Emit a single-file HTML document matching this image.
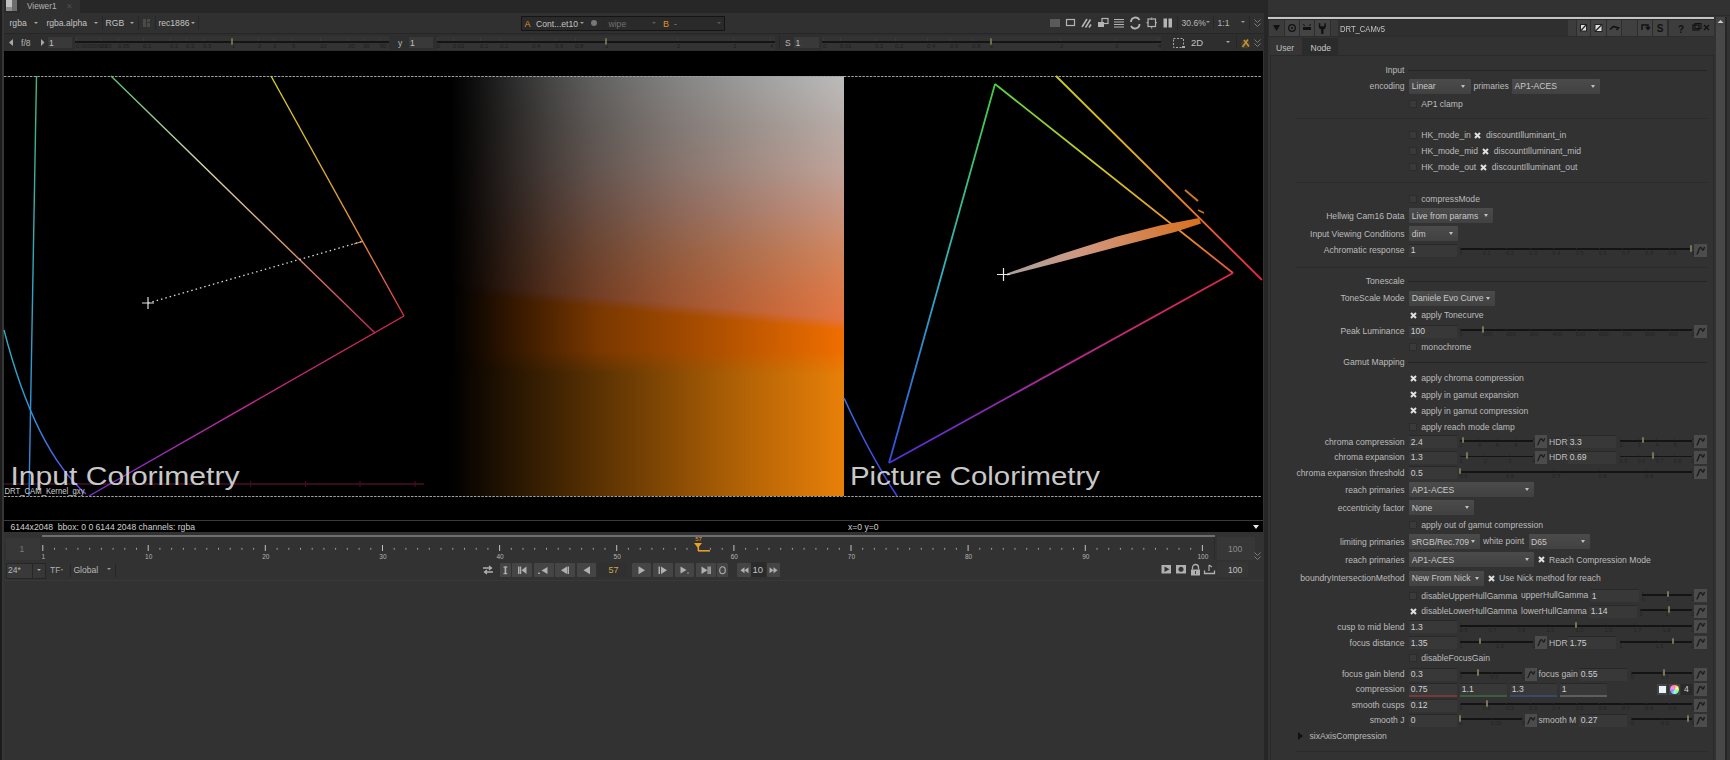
<!DOCTYPE html>
<html><head><meta charset="utf-8">
<style>
*{margin:0;padding:0;box-sizing:border-box}
html,body{width:1730px;height:760px;overflow:hidden;background:#323232;font-family:"Liberation Sans",sans-serif;color:#c8c8c8;position:relative}
.a{position:absolute}
.t{position:absolute;white-space:nowrap;line-height:10px}
svg{position:absolute;overflow:visible}
</style></head><body>

<div class="a" style="left:0px;top:0px;width:1264px;height:13px;background:#272727;"></div>
<div class="a" style="left:0px;top:0px;width:1.5px;height:760px;background:#1c1c1c;"></div>
<div class="a" style="left:1.5px;top:0px;width:2.5px;height:760px;background:#363636;"></div>
<div class="a" style="left:4px;top:0px;width:16px;height:13px;background:#2b2b2b;"></div>
<div class="a" style="left:6px;top:0px;width:6px;height:6.5px;background:#c0c0c0;"></div>
<div class="a" style="left:6px;top:6.5px;width:6px;height:4px;background:#8e8e8e;"></div>
<div class="a" style="left:12px;top:0px;width:5px;height:10.5px;background:#6c6c6c;"></div>
<div class="a" style="left:20px;top:0px;width:60px;height:13px;background:#303030;"></div>
<div class="t" style="left:27px;top:1.5px;color:#b4b4b4;font-size:8.2px;">Viewer1</div>
<div class="t" style="left:66px;top:2px;color:#4e4e4e;font-size:8px">&#x2715;</div>
<div class="a" style="left:4px;top:13px;width:1260px;height:20px;background:#303030;"></div>
<div class="a" style="left:4px;top:33px;width:1260px;height:1px;background:#262626;"></div>
<div class="t" style="left:9.5px;top:18px;color:#c4c4c4;font-size:8.6px;">rgba</div>
<div class="a" style="left:34.0px;top:21.75px;width:0;height:0;border-left:2.0px solid transparent;border-right:2.0px solid transparent;border-top:2.5px solid #a8a8a8"></div>
<div class="t" style="left:46.4px;top:18px;color:#c4c4c4;font-size:8.6px;">rgba.alpha</div>
<div class="a" style="left:94.0px;top:21.75px;width:0;height:0;border-left:2.0px solid transparent;border-right:2.0px solid transparent;border-top:2.5px solid #a8a8a8"></div>
<div class="a" style="left:101.5px;top:16px;width:1px;height:14px;background:#262626;"></div>
<div class="t" style="left:105.6px;top:18px;color:#c4c4c4;font-size:8.6px;">RGB</div>
<div class="a" style="left:129.5px;top:21.75px;width:0;height:0;border-left:2.0px solid transparent;border-right:2.0px solid transparent;border-top:2.5px solid #a8a8a8"></div>
<div class="a" style="left:138px;top:16px;width:1px;height:14px;background:#262626;"></div>
<div class="a" style="left:143px;top:19px;width:3px;height:8px;background:#4a4a4a;"></div>
<div class="a" style="left:147px;top:19px;width:3px;height:3px;background:#4a4a4a;"></div>
<div class="a" style="left:147px;top:23px;width:3px;height:4px;background:#4a4a4a;"></div>
<div class="a" style="left:154.5px;top:16px;width:1px;height:14px;background:#262626;"></div>
<div class="t" style="left:158.4px;top:18px;color:#c4c4c4;font-size:8.6px;">rec1886</div>
<div class="a" style="left:191.0px;top:21.75px;width:0;height:0;border-left:2.0px solid transparent;border-right:2.0px solid transparent;border-top:2.5px solid #a8a8a8"></div>
<div class="a" style="left:198px;top:16px;width:1px;height:14px;background:#262626;"></div>
<div class="a" style="left:521px;top:16px;width:204px;height:15px;background:#151515;"></div>
<div class="a" style="left:522px;top:17px;width:202px;height:13px;background:#2a2a2a;"></div>
<div class="t" style="left:524.5px;top:18.5px;color:#e0902a;font-size:9px;">A</div>
<div class="t" style="left:536px;top:18.5px;color:#c4c4c4;font-size:8.6px;">Cont...et10</div>
<div class="a" style="left:580.0px;top:21.5px;width:0;height:0;border-left:2.0px solid transparent;border-right:2.0px solid transparent;border-top:2px solid #999"></div>
<div class="a" style="left:591px;top:20px;width:6px;height:6px;border-radius:3px;background:#777"></div>
<div class="a" style="left:603px;top:17px;width:1px;height:13px;background:#272727;"></div>
<div class="t" style="left:608.5px;top:18.5px;color:#707070;font-size:8.6px;">wipe</div>
<div class="a" style="left:651.5px;top:21.5px;width:0;height:0;border-left:2.0px solid transparent;border-right:2.0px solid transparent;border-top:2px solid #5a5a5a"></div>
<div class="t" style="left:663px;top:18.5px;color:#e0902a;font-size:9px;">B</div>
<div class="t" style="left:674px;top:18.5px;color:#888;font-size:8.6px;">-</div>
<div class="a" style="left:716.5px;top:21.5px;width:0;height:0;border-left:2.0px solid transparent;border-right:2.0px solid transparent;border-top:2px solid #5a5a5a"></div>
<svg style="left:0;top:0" width="1730" height="60" viewBox="0 0 1730 60">
<rect x="1050" y="19" width="10" height="8" fill="#5a5a5a"/>
<rect x="1066.5" y="19.5" width="8" height="6" fill="none" stroke="#b4b4b4" stroke-width="1.2"/>
<path d="M1082 27L1087 19M1085.5 27.5L1090.5 19.5M1089 27.5l2-3" stroke="#b4b4b4" stroke-width="1.6"/>
<rect x="1102" y="18.5" width="6" height="5" fill="none" stroke="#b4b4b4" stroke-width="1.2"/><rect x="1098" y="22" width="6" height="5" fill="#b4b4b4"/>
<path d="M1114 19.5h10M1114 22h10M1114 24.5h10M1114 27h10" stroke="#b4b4b4" stroke-width="1.2"/>
<path d="M1131 22a4.5 4.5 0 0 1 8.5-2M1139.5 24a4.5 4.5 0 0 1-8.5 2" fill="none" stroke="#b4b4b4" stroke-width="1.8"/>
<rect x="1148" y="19" width="7.5" height="7.5" fill="none" stroke="#b4b4b4" stroke-width="1.2"/>
<path d="M1151.7 17.5v2M1151.7 26.5v2M1146.5 22.7h2M1155 22.7h2" stroke="#b4b4b4" stroke-width="1"/>
<rect x="1163.5" y="18.5" width="3.5" height="9" fill="#b4b4b4"/><rect x="1168.5" y="18.5" width="3.5" height="9" fill="#b4b4b4"/>
</svg>
<div class="a" style="left:1177px;top:16px;width:1px;height:14px;background:#262626;"></div>
<div class="t" style="left:1181.5px;top:18px;color:#b8b8b8;font-size:8.6px;">30.6%</div>
<div class="a" style="left:1206.0px;top:21.25px;width:0;height:0;border-left:2.0px solid transparent;border-right:2.0px solid transparent;border-top:2.5px solid #999"></div>
<div class="a" style="left:1213px;top:16px;width:1px;height:14px;background:#262626;"></div>
<div class="t" style="left:1217.5px;top:18px;color:#b8b8b8;font-size:8.6px;">1:1</div>
<div class="a" style="left:1241.0px;top:21.25px;width:0;height:0;border-left:2.0px solid transparent;border-right:2.0px solid transparent;border-top:2.5px solid #999"></div>
<div class="a" style="left:1248.5px;top:16px;width:1px;height:14px;background:#262626;"></div>
<svg style="left:1253px;top:18px" width="9" height="10" viewBox="0 0 9 10"><path d="M1.5 1.5l3 3 3-3M1.5 5.5l3 3 3-3" fill="none" stroke="#858585" stroke-width="0.9"/></svg>
<div class="a" style="left:4px;top:34px;width:1260px;height:17px;background:#2e2e2e;"></div>
<svg style="left:0;top:30px" width="1730" height="24" viewBox="0 30 1730 24"><path d="M9 42.5l4-3.5v7z" fill="#a8a8a8"/><path d="M41 39v7l3.5-3.5z" fill="#a8a8a8"/></svg>
<div class="t" style="left:21px;top:37.5px;color:#b8b8b8;font-size:8.6px;">f/8</div>
<div class="a" style="left:47.5px;top:37px;width:24.5px;height:11px;background:#393939;"></div>
<div class="t" style="left:49.0px;top:37.5px;color:#c0c0c0;font-size:8.6px;">1</div>
<div class="a" style="left:75px;top:35.5px;width:313.5px;height:14px;background:#333333;"></div>
<div class="a" style="left:75px;top:41.2px;width:313.5px;height:2px;background:#141414;"></div>
<div class="a" style="left:76px;top:38.0px;width:1px;height:3px;background:#3c3c3c;"></div>
<div class="t" style="left:76px;top:41.0px;color:#1e1e1e;font-size:6px;">0.00000625</div>
<div class="a" style="left:100px;top:38.0px;width:1px;height:3px;background:#3c3c3c;"></div>
<div class="t" style="left:100px;top:41.0px;color:#1e1e1e;font-size:6px;">0.03</div>
<div class="a" style="left:118px;top:38.0px;width:1px;height:3px;background:#3c3c3c;"></div>
<div class="t" style="left:118px;top:41.0px;color:#1e1e1e;font-size:6px;">0.05</div>
<div class="a" style="left:143px;top:38.0px;width:1px;height:3px;background:#3c3c3c;"></div>
<div class="t" style="left:143px;top:41.0px;color:#1e1e1e;font-size:6px;">0.1</div>
<div class="a" style="left:170px;top:38.0px;width:1px;height:3px;background:#3c3c3c;"></div>
<div class="t" style="left:170px;top:41.0px;color:#1e1e1e;font-size:6px;">0.2</div>
<div class="a" style="left:186px;top:38.0px;width:1px;height:3px;background:#3c3c3c;"></div>
<div class="t" style="left:186px;top:41.0px;color:#1e1e1e;font-size:6px;">0.3</div>
<div class="a" style="left:203px;top:38.0px;width:1px;height:3px;background:#3c3c3c;"></div>
<div class="t" style="left:203px;top:41.0px;color:#1e1e1e;font-size:6px;">0.5</div>
<div class="a" style="left:232px;top:38.0px;width:1px;height:3px;background:#3c3c3c;"></div>
<div class="t" style="left:232px;top:41.0px;color:#1e1e1e;font-size:6px;">1</div>
<div class="a" style="left:258px;top:38.0px;width:1px;height:3px;background:#3c3c3c;"></div>
<div class="t" style="left:258px;top:41.0px;color:#1e1e1e;font-size:6px;">2</div>
<div class="a" style="left:273px;top:38.0px;width:1px;height:3px;background:#3c3c3c;"></div>
<div class="t" style="left:273px;top:41.0px;color:#1e1e1e;font-size:6px;">3</div>
<div class="a" style="left:292px;top:38.0px;width:1px;height:3px;background:#3c3c3c;"></div>
<div class="t" style="left:292px;top:41.0px;color:#1e1e1e;font-size:6px;">5</div>
<div class="a" style="left:320px;top:38.0px;width:1px;height:3px;background:#3c3c3c;"></div>
<div class="t" style="left:320px;top:41.0px;color:#1e1e1e;font-size:6px;">10</div>
<div class="a" style="left:348px;top:38.0px;width:1px;height:3px;background:#3c3c3c;"></div>
<div class="t" style="left:348px;top:41.0px;color:#1e1e1e;font-size:6px;">20</div>
<div class="a" style="left:363px;top:38.0px;width:1px;height:3px;background:#3c3c3c;"></div>
<div class="t" style="left:363px;top:41.0px;color:#1e1e1e;font-size:6px;">30</div>
<div class="a" style="left:380px;top:38.0px;width:1px;height:3px;background:#3c3c3c;"></div>
<div class="t" style="left:380px;top:41.0px;color:#1e1e1e;font-size:6px;">50</div>
<div class="a" style="left:231px;top:37.5px;width:2px;height:7px;background:#6e6e4c;border-radius:1px"></div>
<div class="t" style="left:398px;top:37.5px;color:#b8b8b8;font-size:8.6px;">y</div>
<div class="a" style="left:408.5px;top:37px;width:24.5px;height:11px;background:#393939;"></div>
<div class="t" style="left:410.0px;top:37.5px;color:#c0c0c0;font-size:8.6px;">1</div>
<div class="a" style="left:436.5px;top:35.5px;width:338.5px;height:14px;background:#333333;"></div>
<div class="a" style="left:436.5px;top:41.2px;width:338.5px;height:2px;background:#141414;"></div>
<div class="a" style="left:437px;top:38.0px;width:1px;height:3px;background:#3c3c3c;"></div>
<div class="t" style="left:437px;top:41.0px;color:#1e1e1e;font-size:6px;">0</div>
<div class="a" style="left:453px;top:38.0px;width:1px;height:3px;background:#3c3c3c;"></div>
<div class="t" style="left:453px;top:41.0px;color:#1e1e1e;font-size:6px;">0.01</div>
<div class="a" style="left:480px;top:38.0px;width:1px;height:3px;background:#3c3c3c;"></div>
<div class="t" style="left:480px;top:41.0px;color:#1e1e1e;font-size:6px;">0.1</div>
<div class="a" style="left:500px;top:38.0px;width:1px;height:3px;background:#3c3c3c;"></div>
<div class="t" style="left:500px;top:41.0px;color:#1e1e1e;font-size:6px;">0.2</div>
<div class="a" style="left:532px;top:38.0px;width:1px;height:3px;background:#3c3c3c;"></div>
<div class="t" style="left:532px;top:41.0px;color:#1e1e1e;font-size:6px;">0.4</div>
<div class="a" style="left:555px;top:38.0px;width:1px;height:3px;background:#3c3c3c;"></div>
<div class="t" style="left:555px;top:41.0px;color:#1e1e1e;font-size:6px;">0.6</div>
<div class="a" style="left:575px;top:38.0px;width:1px;height:3px;background:#3c3c3c;"></div>
<div class="t" style="left:575px;top:41.0px;color:#1e1e1e;font-size:6px;">0.8</div>
<div class="a" style="left:605px;top:38.0px;width:1px;height:3px;background:#3c3c3c;"></div>
<div class="t" style="left:605px;top:41.0px;color:#1e1e1e;font-size:6px;">1</div>
<div class="a" style="left:677px;top:38.0px;width:1px;height:3px;background:#3c3c3c;"></div>
<div class="t" style="left:677px;top:41.0px;color:#1e1e1e;font-size:6px;">2</div>
<div class="a" style="left:733px;top:38.0px;width:1px;height:3px;background:#3c3c3c;"></div>
<div class="t" style="left:733px;top:41.0px;color:#1e1e1e;font-size:6px;">3</div>
<div class="a" style="left:770px;top:38.0px;width:1px;height:3px;background:#3c3c3c;"></div>
<div class="t" style="left:770px;top:41.0px;color:#1e1e1e;font-size:6px;">4</div>
<div class="a" style="left:605px;top:37.5px;width:2px;height:7px;background:#6e6e4c;border-radius:1px"></div>
<div class="a" style="left:778.5px;top:36px;width:1px;height:13px;background:#262626;"></div>
<div class="t" style="left:785px;top:37.5px;color:#b8b8b8;font-size:8.6px;">S</div>
<div class="a" style="left:794px;top:37px;width:25px;height:11px;background:#393939;"></div>
<div class="t" style="left:795.5px;top:37.5px;color:#c0c0c0;font-size:8.6px;">1</div>
<div class="a" style="left:822px;top:35.5px;width:339px;height:14px;background:#333333;"></div>
<div class="a" style="left:822px;top:41.2px;width:339px;height:2px;background:#141414;"></div>
<div class="a" style="left:823px;top:38.0px;width:1px;height:3px;background:#3c3c3c;"></div>
<div class="t" style="left:823px;top:41.0px;color:#1e1e1e;font-size:6px;">0</div>
<div class="a" style="left:840px;top:38.0px;width:1px;height:3px;background:#3c3c3c;"></div>
<div class="t" style="left:840px;top:41.0px;color:#1e1e1e;font-size:6px;">0.01</div>
<div class="a" style="left:875px;top:38.0px;width:1px;height:3px;background:#3c3c3c;"></div>
<div class="t" style="left:875px;top:41.0px;color:#1e1e1e;font-size:6px;">0.1</div>
<div class="a" style="left:895px;top:38.0px;width:1px;height:3px;background:#3c3c3c;"></div>
<div class="t" style="left:895px;top:41.0px;color:#1e1e1e;font-size:6px;">0.2</div>
<div class="a" style="left:927px;top:38.0px;width:1px;height:3px;background:#3c3c3c;"></div>
<div class="t" style="left:927px;top:41.0px;color:#1e1e1e;font-size:6px;">0.4</div>
<div class="a" style="left:950px;top:38.0px;width:1px;height:3px;background:#3c3c3c;"></div>
<div class="t" style="left:950px;top:41.0px;color:#1e1e1e;font-size:6px;">0.6</div>
<div class="a" style="left:972px;top:38.0px;width:1px;height:3px;background:#3c3c3c;"></div>
<div class="t" style="left:972px;top:41.0px;color:#1e1e1e;font-size:6px;">0.8</div>
<div class="a" style="left:990px;top:38.0px;width:1px;height:3px;background:#3c3c3c;"></div>
<div class="t" style="left:990px;top:41.0px;color:#1e1e1e;font-size:6px;">1</div>
<div class="a" style="left:1060px;top:38.0px;width:1px;height:3px;background:#3c3c3c;"></div>
<div class="t" style="left:1060px;top:41.0px;color:#1e1e1e;font-size:6px;">2</div>
<div class="a" style="left:1115px;top:38.0px;width:1px;height:3px;background:#3c3c3c;"></div>
<div class="t" style="left:1115px;top:41.0px;color:#1e1e1e;font-size:6px;">3</div>
<div class="a" style="left:1158px;top:38.0px;width:1px;height:3px;background:#3c3c3c;"></div>
<div class="t" style="left:1158px;top:41.0px;color:#1e1e1e;font-size:6px;">4</div>
<div class="a" style="left:990px;top:37.5px;width:2px;height:7px;background:#6e6e4c;border-radius:1px"></div>
<svg style="left:1170px;top:36px" width="20" height="14" viewBox="0 0 20 14"><rect x="3.5" y="2.5" width="10" height="9" fill="none" stroke="#aaa" stroke-width="1" stroke-dasharray="2 1.5"/><path d="M12 10h3v2h-3z" fill="#aaa"/></svg>
<div class="t" style="left:1191px;top:37.5px;color:#c0c0c0;font-size:9.5px;">2D</div>
<div class="a" style="left:1226.0px;top:40.75px;width:0;height:0;border-left:2.0px solid transparent;border-right:2.0px solid transparent;border-top:2.5px solid #aaa"></div>
<div class="a" style="left:1235.5px;top:36px;width:1px;height:13px;background:#262626;"></div>
<svg style="left:1239px;top:37px" width="13" height="12" viewBox="0 0 13 12"><circle cx="6.5" cy="7" r="4.5" fill="#4a3a22"/><path d="M3.5 10L9 2.5M5 3l5 6.5" stroke="#b89440" stroke-width="1.6"/></svg>
<svg style="left:1253px;top:38px" width="9" height="10" viewBox="0 0 9 10"><path d="M1.5 1.5l3 3 3-3M1.5 5.5l3 3 3-3" fill="none" stroke="#858585" stroke-width="0.9"/></svg>
<div class="a" style="left:4px;top:51px;width:1258.5px;height:481px;background:#000;"></div>
<div class="a" style="left:423px;top:76px;width:421px;height:420px;overflow:hidden;background:#000">
<div class="a" style="left:0;top:0;width:421px;height:420px;background:linear-gradient(#e88008,#e88008),linear-gradient(to right,#000 0%,#000 6.5%,#101010 12%,#353535 25%,#7a7a7a 50%,#c2c2c2 75%,#fff 100%);background-blend-mode:multiply"></div>
<div class="a" style="left:0;top:0;width:421px;height:420px;background:linear-gradient(#f06e00,#f06e00),linear-gradient(to right,#000 0%,#000 6.5%,#121212 12%,#3d3d3d 23%,#828282 42%,#bababa 70%,#fff 100%);background-blend-mode:multiply;-webkit-mask-image:linear-gradient(to bottom,#000 0%,#000 65.5%,transparent 71%);mask-image:linear-gradient(to bottom,#000 0%,#000 65.5%,transparent 71%)"></div>
<div class="a" style="left:0;top:0;width:421px;height:420px;background:linear-gradient(to bottom,#bcbcbc 0%,#b8aca6 12%,#c0a49a 22%,#c89480 32%,#d2865e 42%,#dc7c4c 50%,#e47440 58%),linear-gradient(to right,#000 0%,#000 6.5%,#141414 12%,#363636 20%,#5e5e5e 30%,#808080 40%,#9a9a9a 50%,#b2b2b2 60%,#dadada 80%,#fff 100%);background-blend-mode:multiply;-webkit-mask-image:linear-gradient(185.3deg,#000 53%,transparent 55.6%);mask-image:linear-gradient(185.3deg,#000 53%,transparent 55.6%)"></div>
</div>
<svg style="left:0;top:0" width="1730" height="760" viewBox="0 0 1730 760">
<defs><filter id="bl" x="-5%" y="-20%" width="110%" height="140%"><feGaussianBlur stdDeviation="0.6"/></filter>
<linearGradient id="g1" gradientUnits="userSpaceOnUse" x1="36" y1="76" x2="29" y2="496"><stop offset="0" stop-color="#3db87e"/><stop offset="0.5" stop-color="#30a8c0"/><stop offset="1" stop-color="#3080e0"/></linearGradient>
<linearGradient id="g2" gradientUnits="userSpaceOnUse" x1="111" y1="76" x2="375" y2="333"><stop offset="0" stop-color="#5cc070"/><stop offset="0.35" stop-color="#d8d8a8"/><stop offset="0.7" stop-color="#e09060"/><stop offset="1" stop-color="#c02860"/></linearGradient>
<linearGradient id="g3" gradientUnits="userSpaceOnUse" x1="271" y1="76" x2="404" y2="316"><stop offset="0" stop-color="#d8d020"/><stop offset="0.6" stop-color="#e09838"/><stop offset="0.88" stop-color="#e06040"/><stop offset="1" stop-color="#d83048"/></linearGradient>
<linearGradient id="g4" gradientUnits="userSpaceOnUse" x1="404" y1="316" x2="90" y2="496"><stop offset="0" stop-color="#d82850"/><stop offset="0.5" stop-color="#c02890"/><stop offset="1" stop-color="#8030e0"/></linearGradient>
<linearGradient id="g5" gradientUnits="userSpaceOnUse" x1="4" y1="330" x2="85" y2="496"><stop offset="0" stop-color="#30b0b8"/><stop offset="0.5" stop-color="#3090e0"/><stop offset="1" stop-color="#6040f0"/></linearGradient>
<linearGradient id="h1" gradientUnits="userSpaceOnUse" x1="995" y1="84" x2="889" y2="463"><stop offset="0" stop-color="#40d040"/><stop offset="0.5" stop-color="#30b0c0"/><stop offset="1" stop-color="#3050e0"/></linearGradient>
<linearGradient id="h2" gradientUnits="userSpaceOnUse" x1="995" y1="84" x2="1233" y2="273"><stop offset="0" stop-color="#50d040"/><stop offset="0.4" stop-color="#d0d020"/><stop offset="0.8" stop-color="#f09020"/><stop offset="1" stop-color="#e05040"/></linearGradient>
<linearGradient id="h3" gradientUnits="userSpaceOnUse" x1="1056" y1="76" x2="1262" y2="280"><stop offset="0" stop-color="#c8d020"/><stop offset="0.5" stop-color="#f0a020"/><stop offset="1" stop-color="#e82040"/></linearGradient>
<linearGradient id="h4" gradientUnits="userSpaceOnUse" x1="1233" y1="273" x2="889" y2="463"><stop offset="0" stop-color="#e02848"/><stop offset="0.5" stop-color="#b02890"/><stop offset="1" stop-color="#5030e0"/></linearGradient>
<linearGradient id="h5" gradientUnits="userSpaceOnUse" x1="844" y1="400" x2="895" y2="496"><stop offset="0" stop-color="#3070e0"/><stop offset="1" stop-color="#4838e8"/></linearGradient>
<linearGradient id="w1" gradientUnits="userSpaceOnUse" x1="1003" y1="274" x2="1199" y2="222"><stop offset="0" stop-color="#a8a0a0"/><stop offset="0.4" stop-color="#d09880"/><stop offset="1" stop-color="#d87020"/></linearGradient>
</defs>
<g fill="none" stroke-width="1.4">
<line x1="4" y1="76.5" x2="1262" y2="76.5" stroke="#a0a0a0" stroke-width="1" stroke-dasharray="2.5 1.2"/>
<line x1="4" y1="496.5" x2="1262" y2="496.5" stroke="#a0a0a0" stroke-width="1" stroke-dasharray="2.5 1.2"/>
<line x1="4" y1="484" x2="424" y2="484" stroke="#4a1020" stroke-width="1.5"/>
<path d="M250.7 481v6M305.6 481v6M360 481v6M415 481v6" stroke="#4a1020" stroke-width="1"/>
<line x1="36.5" y1="76" x2="29" y2="496" stroke="url(#g1)"/>
<line x1="111" y1="76" x2="375" y2="333" stroke="url(#g2)"/>
<line x1="271" y1="76" x2="404" y2="316" stroke="url(#g3)"/>
<line x1="404" y1="316" x2="89" y2="496" stroke="url(#g4)"/>
<path d="M4 330 Q 35 450 86 494" stroke="url(#g5)"/>
<line x1="148" y1="303" x2="362" y2="241.5" stroke="#d8d8d8" stroke-width="1.3" stroke-dasharray="1.5 3"/>
<line x1="354" y1="244" x2="363" y2="241.3" stroke="#d8a050" stroke-width="1.2"/>
<path d="M142 303H154M148 297V309" stroke="#e0e0e0" stroke-width="1.2"/>
<line x1="995" y1="84" x2="889" y2="463" stroke="url(#h1)" stroke-width="1.8"/>
<line x1="995" y1="84" x2="1233" y2="273" stroke="url(#h2)" stroke-width="1.8"/>
<line x1="1056" y1="76" x2="1262" y2="280" stroke="url(#h3)" stroke-width="1.8"/>
<line x1="1233" y1="273" x2="889" y2="463" stroke="url(#h4)" stroke-width="1.8"/>
<path d="M844 398 Q 870 455 897 496" stroke="url(#h5)" stroke-width="1.6"/>
<polygon points="1007,273.5 1060,254.5 1117,236.5 1160,225.5 1199,218 1201,223.5 1175,232 1117,247 1060,262 1007,275.5" fill="url(#w1)" stroke="none" filter="url(#bl)"/>
<line x1="1185" y1="190" x2="1198" y2="201" stroke="#c87828" stroke-width="2"/>
<line x1="1198" y1="210" x2="1204" y2="213" stroke="#c87828" stroke-width="1.5"/>
<path d="M997 274.5H1010M1003.5 268V281" stroke="#e8e8e8" stroke-width="1.2"/>
</g>
<text x="10.5" y="485" font-family="Liberation Sans" font-size="26" fill="#c8c8c8" textLength="229" lengthAdjust="spacingAndGlyphs">Input Colorimetry</text>
<text x="850" y="485" font-family="Liberation Sans" font-size="26" fill="#c8c8c8" textLength="250" lengthAdjust="spacingAndGlyphs">Picture Colorimetry</text>
<text x="4.5" y="494" font-family="Liberation Sans" font-size="8.5" fill="#d0d0d0" textLength="80" lengthAdjust="spacingAndGlyphs">DRT_CAM_Kernel_gxy</text>
</svg>
<div class="a" style="left:4px;top:520px;width:1258.5px;height:1px;background:#3a3a3a;"></div>
<div class="t" style="left:10.5px;top:521.5px;color:#d0d0d0;font-size:8.6px;">6144x2048&nbsp; bbox: 0 0 6144 2048 channels: rgba</div>
<div class="t" style="left:848px;top:521.5px;color:#d0d0d0;font-size:8.6px;">x=0 y=0</div>
<div class="a" style="left:1253.0px;top:524.5px;width:0;height:0;border-left:3.5px solid transparent;border-right:3.5px solid transparent;border-top:4px solid #e8e8e8"></div>
<div class="a" style="left:4px;top:532px;width:1260px;height:48px;background:#323232;"></div>
<div class="a" style="left:42px;top:535px;width:1172.5px;height:2px;background:#6e6e6e;"></div>
<div class="a" style="left:5.5px;top:537.5px;width:34.5px;height:22.5px;background:#373737;"></div>
<div class="t" style="left:19.5px;top:544px;color:#7a7a7a;font-size:8.6px;">1</div>
<div class="a" style="left:1214px;top:537px;width:1px;height:23px;background:#2a2a2a;"></div>
<div class="a" style="left:1217px;top:537px;width:38px;height:23px;background:#373737;"></div>
<div class="t" style="left:1228px;top:544px;color:#8a8a8a;font-size:8.6px;">100</div>
<svg style="left:0;top:0" width="1730" height="600" viewBox="0 0 1730 600"><rect x="42.3" y="545" width="1" height="6" fill="#c0c0c0"/><rect x="54.0" y="547.8" width="1" height="2" fill="#9a9a9a"/><rect x="65.7" y="547.8" width="1" height="2" fill="#9a9a9a"/><rect x="77.4" y="547.8" width="1" height="2" fill="#9a9a9a"/><rect x="89.2" y="547.8" width="1" height="2" fill="#9a9a9a"/><rect x="100.9" y="547.8" width="1" height="2" fill="#9a9a9a"/><rect x="112.6" y="547.8" width="1" height="2" fill="#9a9a9a"/><rect x="124.3" y="547.8" width="1" height="2" fill="#9a9a9a"/><rect x="136.0" y="547.8" width="1" height="2" fill="#9a9a9a"/><rect x="147.7" y="545" width="1" height="6" fill="#c0c0c0"/><rect x="159.4" y="547.8" width="1" height="2" fill="#9a9a9a"/><rect x="171.1" y="547.8" width="1" height="2" fill="#9a9a9a"/><rect x="182.9" y="547.8" width="1" height="2" fill="#9a9a9a"/><rect x="194.6" y="547.8" width="1" height="2" fill="#9a9a9a"/><rect x="206.3" y="547.8" width="1" height="2" fill="#9a9a9a"/><rect x="218.0" y="547.8" width="1" height="2" fill="#9a9a9a"/><rect x="229.7" y="547.8" width="1" height="2" fill="#9a9a9a"/><rect x="241.4" y="547.8" width="1" height="2" fill="#9a9a9a"/><rect x="253.1" y="547.8" width="1" height="2" fill="#9a9a9a"/><rect x="264.8" y="545" width="1" height="6" fill="#c0c0c0"/><rect x="276.6" y="547.8" width="1" height="2" fill="#9a9a9a"/><rect x="288.3" y="547.8" width="1" height="2" fill="#9a9a9a"/><rect x="300.0" y="547.8" width="1" height="2" fill="#9a9a9a"/><rect x="311.7" y="547.8" width="1" height="2" fill="#9a9a9a"/><rect x="323.4" y="547.8" width="1" height="2" fill="#9a9a9a"/><rect x="335.1" y="547.8" width="1" height="2" fill="#9a9a9a"/><rect x="346.8" y="547.8" width="1" height="2" fill="#9a9a9a"/><rect x="358.6" y="547.8" width="1" height="2" fill="#9a9a9a"/><rect x="370.3" y="547.8" width="1" height="2" fill="#9a9a9a"/><rect x="382.0" y="545" width="1" height="6" fill="#c0c0c0"/><rect x="393.7" y="547.8" width="1" height="2" fill="#9a9a9a"/><rect x="405.4" y="547.8" width="1" height="2" fill="#9a9a9a"/><rect x="417.1" y="547.8" width="1" height="2" fill="#9a9a9a"/><rect x="428.8" y="547.8" width="1" height="2" fill="#9a9a9a"/><rect x="440.5" y="547.8" width="1" height="2" fill="#9a9a9a"/><rect x="452.3" y="547.8" width="1" height="2" fill="#9a9a9a"/><rect x="464.0" y="547.8" width="1" height="2" fill="#9a9a9a"/><rect x="475.7" y="547.8" width="1" height="2" fill="#9a9a9a"/><rect x="487.4" y="547.8" width="1" height="2" fill="#9a9a9a"/><rect x="499.1" y="545" width="1" height="6" fill="#c0c0c0"/><rect x="510.8" y="547.8" width="1" height="2" fill="#9a9a9a"/><rect x="522.5" y="547.8" width="1" height="2" fill="#9a9a9a"/><rect x="534.2" y="547.8" width="1" height="2" fill="#9a9a9a"/><rect x="546.0" y="547.8" width="1" height="2" fill="#9a9a9a"/><rect x="557.7" y="547.8" width="1" height="2" fill="#9a9a9a"/><rect x="569.4" y="547.8" width="1" height="2" fill="#9a9a9a"/><rect x="581.1" y="547.8" width="1" height="2" fill="#9a9a9a"/><rect x="592.8" y="547.8" width="1" height="2" fill="#9a9a9a"/><rect x="604.5" y="547.8" width="1" height="2" fill="#9a9a9a"/><rect x="616.2" y="545" width="1" height="6" fill="#c0c0c0"/><rect x="627.9" y="547.8" width="1" height="2" fill="#9a9a9a"/><rect x="639.7" y="547.8" width="1" height="2" fill="#9a9a9a"/><rect x="651.4" y="547.8" width="1" height="2" fill="#9a9a9a"/><rect x="663.1" y="547.8" width="1" height="2" fill="#9a9a9a"/><rect x="674.8" y="547.8" width="1" height="2" fill="#9a9a9a"/><rect x="686.5" y="547.8" width="1" height="2" fill="#9a9a9a"/><rect x="698.2" y="547.8" width="1" height="2" fill="#9a9a9a"/><rect x="709.9" y="547.8" width="1" height="2" fill="#9a9a9a"/><rect x="721.7" y="547.8" width="1" height="2" fill="#9a9a9a"/><rect x="733.4" y="545" width="1" height="6" fill="#c0c0c0"/><rect x="745.1" y="547.8" width="1" height="2" fill="#9a9a9a"/><rect x="756.8" y="547.8" width="1" height="2" fill="#9a9a9a"/><rect x="768.5" y="547.8" width="1" height="2" fill="#9a9a9a"/><rect x="780.2" y="547.8" width="1" height="2" fill="#9a9a9a"/><rect x="791.9" y="547.8" width="1" height="2" fill="#9a9a9a"/><rect x="803.6" y="547.8" width="1" height="2" fill="#9a9a9a"/><rect x="815.4" y="547.8" width="1" height="2" fill="#9a9a9a"/><rect x="827.1" y="547.8" width="1" height="2" fill="#9a9a9a"/><rect x="838.8" y="547.8" width="1" height="2" fill="#9a9a9a"/><rect x="850.5" y="545" width="1" height="6" fill="#c0c0c0"/><rect x="862.2" y="547.8" width="1" height="2" fill="#9a9a9a"/><rect x="873.9" y="547.8" width="1" height="2" fill="#9a9a9a"/><rect x="885.6" y="547.8" width="1" height="2" fill="#9a9a9a"/><rect x="897.3" y="547.8" width="1" height="2" fill="#9a9a9a"/><rect x="909.1" y="547.8" width="1" height="2" fill="#9a9a9a"/><rect x="920.8" y="547.8" width="1" height="2" fill="#9a9a9a"/><rect x="932.5" y="547.8" width="1" height="2" fill="#9a9a9a"/><rect x="944.2" y="547.8" width="1" height="2" fill="#9a9a9a"/><rect x="955.9" y="547.8" width="1" height="2" fill="#9a9a9a"/><rect x="967.6" y="545" width="1" height="6" fill="#c0c0c0"/><rect x="979.3" y="547.8" width="1" height="2" fill="#9a9a9a"/><rect x="991.1" y="547.8" width="1" height="2" fill="#9a9a9a"/><rect x="1002.8" y="547.8" width="1" height="2" fill="#9a9a9a"/><rect x="1014.5" y="547.8" width="1" height="2" fill="#9a9a9a"/><rect x="1026.2" y="547.8" width="1" height="2" fill="#9a9a9a"/><rect x="1037.9" y="547.8" width="1" height="2" fill="#9a9a9a"/><rect x="1049.6" y="547.8" width="1" height="2" fill="#9a9a9a"/><rect x="1061.3" y="547.8" width="1" height="2" fill="#9a9a9a"/><rect x="1073.0" y="547.8" width="1" height="2" fill="#9a9a9a"/><rect x="1084.8" y="545" width="1" height="6" fill="#c0c0c0"/><rect x="1096.5" y="547.8" width="1" height="2" fill="#9a9a9a"/><rect x="1108.2" y="547.8" width="1" height="2" fill="#9a9a9a"/><rect x="1119.9" y="547.8" width="1" height="2" fill="#9a9a9a"/><rect x="1131.6" y="547.8" width="1" height="2" fill="#9a9a9a"/><rect x="1143.3" y="547.8" width="1" height="2" fill="#9a9a9a"/><rect x="1155.0" y="547.8" width="1" height="2" fill="#9a9a9a"/><rect x="1166.7" y="547.8" width="1" height="2" fill="#9a9a9a"/><rect x="1178.5" y="547.8" width="1" height="2" fill="#9a9a9a"/><rect x="1190.2" y="547.8" width="1" height="2" fill="#9a9a9a"/><rect x="1201.9" y="545" width="1" height="6" fill="#c0c0c0"/></svg>
<div class="t" style="left:-6.700000000000003px;width:100px;text-align:center;top:551.5px;color:#b4b4b4;font-size:6.5px;">1</div>
<div class="t" style="left:98.71699999999998px;width:100px;text-align:center;top:551.5px;color:#b4b4b4;font-size:6.5px;">10</div>
<div class="t" style="left:215.84699999999998px;width:100px;text-align:center;top:551.5px;color:#b4b4b4;font-size:6.5px;">20</div>
<div class="t" style="left:332.977px;width:100px;text-align:center;top:551.5px;color:#b4b4b4;font-size:6.5px;">30</div>
<div class="t" style="left:450.10699999999997px;width:100px;text-align:center;top:551.5px;color:#b4b4b4;font-size:6.5px;">40</div>
<div class="t" style="left:567.237px;width:100px;text-align:center;top:551.5px;color:#b4b4b4;font-size:6.5px;">50</div>
<div class="t" style="left:684.367px;width:100px;text-align:center;top:551.5px;color:#b4b4b4;font-size:6.5px;">60</div>
<div class="t" style="left:801.4969999999998px;width:100px;text-align:center;top:551.5px;color:#b4b4b4;font-size:6.5px;">70</div>
<div class="t" style="left:918.6269999999998px;width:100px;text-align:center;top:551.5px;color:#b4b4b4;font-size:6.5px;">80</div>
<div class="t" style="left:1035.7569999999998px;width:100px;text-align:center;top:551.5px;color:#b4b4b4;font-size:6.5px;">90</div>
<div class="t" style="left:1152.887px;width:100px;text-align:center;top:551.5px;color:#b4b4b4;font-size:6.5px;">100</div>
<svg style="left:0;top:0" width="1730" height="600" viewBox="0 0 1730 600"><path d="M694 543h8l-4 5z" fill="#f0a020"/><rect x="697.6" y="547" width="1.4" height="4" fill="#f0a020"/><rect x="698" y="550" width="12" height="1.6" fill="#e0a030"/></svg>
<div class="t" style="left:648.5px;width:100px;text-align:center;top:534px;color:#e0a030;font-size:6px;">57</div>
<svg style="left:1253px;top:551px" width="9" height="10" viewBox="0 0 9 10"><path d="M1.5 1.5l3 3 3-3M1.5 5.5l3 3 3-3" fill="none" stroke="#858585" stroke-width="0.9"/></svg>
<div class="a" style="left:5.5px;top:562.5px;width:40px;height:16px;background:#262626;"></div>
<div class="a" style="left:6.5px;top:563.5px;width:25.5px;height:14px;background:#393939;"></div>
<div class="a" style="left:33px;top:563.5px;width:12px;height:14px;background:#373737;"></div>
<div class="t" style="left:8px;top:565px;color:#b8b8b8;font-size:8.6px;">24*</div>
<div class="a" style="left:36.5px;top:568.75px;width:0;height:0;border-left:2.0px solid transparent;border-right:2.0px solid transparent;border-top:2.5px solid #aaa"></div>
<div class="t" style="left:50px;top:565px;color:#b0b0b0;font-size:8.6px;">TF</div>
<div class="a" style="left:61.0px;top:568.5px;width:0;height:0;border-left:1.5px solid transparent;border-right:1.5px solid transparent;border-top:2px solid #999"></div>
<div class="a" style="left:69.5px;top:564px;width:1px;height:13px;background:#262626;"></div>
<div class="t" style="left:73.4px;top:565px;color:#b8b8b8;font-size:8.6px;">Global</div>
<div class="a" style="left:106.5px;top:568.25px;width:0;height:0;border-left:2.0px solid transparent;border-right:2.0px solid transparent;border-top:2.5px solid #999"></div>
<div class="a" style="left:115px;top:564px;width:1px;height:13px;background:#262626;"></div>
<svg style="left:481px;top:565px" width="14" height="11" viewBox="0 0 14 11"><path d="M2 3h8M8 1l2.5 2L8 5M12 7H4M6 5L3.5 7 6 9" fill="none" stroke="#b0b0b0" stroke-width="1.3"/></svg>
<div class="a" style="left:499.7px;top:562.5px;width:11.0px;height:14.5px;background:#454545;border-radius:1px"></div>
<svg style="left:499.7px;top:562.5px" width="11.0" height="14.5" viewBox="0 0 11.0 14.5"><rect x="4.6" y="3.5" width="1.6" height="7.5" fill="#b0b0b0"/><rect x="3.5" y="3.5" width="3.8" height="1.2" fill="#b0b0b0"/><rect x="3.5" y="10" width="3.8" height="1.2" fill="#b0b0b0"/></svg>
<div class="a" style="left:512px;top:562.5px;width:19.799999999999955px;height:14.5px;background:#454545;border-radius:1px"></div>
<svg style="left:512px;top:562.5px" width="19.799999999999955" height="14.5" viewBox="0 0 19.799999999999955 14.5"><rect x="6" y="3.5" width="1.5" height="7.5" fill="#b0b0b0"/><rect x="8" y="3.5" width="1.2" height="7.5" fill="#b0b0b0"/><path d="M9.5 7.2l5-3.7v7.4z" fill="#b0b0b0"/></svg>
<div class="a" style="left:534px;top:562.5px;width:19.799999999999955px;height:14.5px;background:#454545;border-radius:1px"></div>
<svg style="left:534px;top:562.5px" width="19.799999999999955" height="14.5" viewBox="0 0 19.799999999999955 14.5"><path d="M7.5 7.5l6-3.5v7z" fill="#b0b0b0"/><path d="M5 9v2M4 10.5h2" stroke="#b0b0b0" stroke-width="0.8"/></svg>
<div class="a" style="left:555.2px;top:562.5px;width:19.5px;height:14.5px;background:#454545;border-radius:1px"></div>
<svg style="left:555.2px;top:562.5px" width="19.5" height="14.5" viewBox="0 0 19.5 14.5"><path d="M6 7.2l6-3.7v7.4z" fill="#b0b0b0"/><rect x="12.5" y="3.5" width="1.5" height="7.5" fill="#b0b0b0"/></svg>
<div class="a" style="left:576.9px;top:562.5px;width:19.100000000000023px;height:14.5px;background:#454545;border-radius:1px"></div>
<svg style="left:576.9px;top:562.5px" width="19.100000000000023" height="14.5" viewBox="0 0 19.100000000000023 14.5"><path d="M6.5 7.2l6.5-4v8z" fill="#b0b0b0"/></svg>
<div class="a" style="left:597px;top:562.5px;width:30px;height:14.5px;background:#303030;"></div>
<div class="t" style="left:608.6px;top:565px;color:#d0a848;font-size:9px;">57</div>
<div class="a" style="left:631.7px;top:562.5px;width:19.5px;height:14.5px;background:#454545;border-radius:1px"></div>
<svg style="left:631.7px;top:562.5px" width="19.5" height="14.5" viewBox="0 0 19.5 14.5"><path d="M6.5 3.2l6.5 4-6.5 4z" fill="#b0b0b0"/></svg>
<div class="a" style="left:653px;top:562.5px;width:20px;height:14.5px;background:#454545;border-radius:1px"></div>
<svg style="left:653px;top:562.5px" width="20" height="14.5" viewBox="0 0 20 14.5"><rect x="5.5" y="3.5" width="1.5" height="7.5" fill="#b0b0b0"/><path d="M8 3.5l6 3.7-6 3.7z" fill="#b0b0b0"/></svg>
<div class="a" style="left:674.5px;top:562.5px;width:19.5px;height:14.5px;background:#454545;border-radius:1px"></div>
<svg style="left:674.5px;top:562.5px" width="19.5" height="14.5" viewBox="0 0 19.5 14.5"><path d="M5.5 3.5l6 3.5-6 3.5z" fill="#b0b0b0"/><path d="M13 9v2" stroke="#b0b0b0" stroke-width="0.8"/></svg>
<div class="a" style="left:696px;top:562.5px;width:19.600000000000023px;height:14.5px;background:#454545;border-radius:1px"></div>
<svg style="left:696px;top:562.5px" width="19.600000000000023" height="14.5" viewBox="0 0 19.600000000000023 14.5"><path d="M5.5 3.5l6 3.7-6 3.7z" fill="#b0b0b0"/><rect x="11.5" y="3.5" width="1.2" height="7.5" fill="#b0b0b0"/><rect x="13.3" y="3.5" width="1.5" height="7.5" fill="#b0b0b0"/></svg>
<div class="a" style="left:717px;top:562.5px;width:11px;height:14.5px;background:#454545;border-radius:1px"></div>
<svg style="left:717px;top:562.5px" width="11" height="14.5" viewBox="0 0 11 14.5"><ellipse cx="5.5" cy="7.2" rx="2.8" ry="3.5" fill="none" stroke="#b0b0b0" stroke-width="1.1"/></svg>
<div class="a" style="left:737px;top:562.5px;width:13.600000000000023px;height:14.5px;background:#454545;border-radius:1px"></div>
<svg style="left:737px;top:562.5px" width="13.600000000000023" height="14.5" viewBox="0 0 13.600000000000023 14.5"><path d="M3.5 7.2l4-3v6zM7.5 7.2l4-3v6z" fill="#b0b0b0"/></svg>
<div class="a" style="left:751px;top:562px;width:15px;height:15px;background:#2a2a2a;"></div>
<div class="t" style="left:752.5px;top:565px;color:#c0c0c0;font-size:9.5px;">10</div>
<div class="a" style="left:767px;top:562.5px;width:13px;height:14.5px;background:#454545;border-radius:1px"></div>
<svg style="left:767px;top:562.5px" width="13" height="14.5" viewBox="0 0 13 14.5"><path d="M2.5 4.2l4 3-4 3zM6.5 4.2l4 3-4 3z" fill="#b0b0b0"/></svg>
<svg style="left:1160px;top:563px" width="60" height="14" viewBox="0 0 60 14">
<rect x="1.5" y="2" width="9.5" height="8.5" fill="#b0b0b0"/><path d="M4.5 3.5l5 2.7-5 2.7z" fill="#333"/>
<rect x="16" y="2" width="10" height="8.5" fill="#b0b0b0"/><circle cx="21" cy="6.2" r="2.5" fill="#333"/>
<path d="M32.5 6.5v-2a3 3 0 0 1 6 0v2" fill="none" stroke="#b0b0b0" stroke-width="1.3"/><rect x="31" y="6.5" width="9" height="6" fill="#b0b0b0"/><rect x="35" y="8" width="1" height="3" fill="#444"/>
<path d="M44.5 7.5v3h10v-3" fill="none" stroke="#b0b0b0" stroke-width="1.3"/><path d="M49 2v6M49 2l3 2" stroke="#b0b0b0" stroke-width="1.1" fill="none"/>
</svg>
<div class="a" style="left:1217px;top:562px;width:31px;height:15px;background:#353535;"></div>
<div class="t" style="left:1228px;top:565px;color:#c0c0c0;font-size:8.6px;">100</div>
<div class="a" style="left:4px;top:580px;width:1260px;height:180px;background:#323232;"></div>
<div class="a" style="left:5px;top:580px;width:1259px;height:1px;background:#393939;"></div>
<div class="a" style="left:1264px;top:0px;width:4px;height:760px;background:#262626;"></div>
<div class="a" style="left:1268px;top:0px;width:462px;height:760px;background:#323232;"></div>
<div class="a" style="left:1268px;top:15px;width:462px;height:1px;background:#2a2a2a;"></div>
<div class="a" style="left:1267.5px;top:16.8px;width:446.5px;height:1.8px;background:#c4c4c4;"></div>
<div class="a" style="left:1268px;top:19px;width:446px;height:18px;background:#2d2d2d;"></div>
<div class="a" style="left:1269px;top:20px;width:14.599999999999909px;height:16px;background:#3c3c3c;border-radius:1px"></div>
<svg style="left:1269px;top:20px" width="14.599999999999909" height="16" viewBox="0 0 14.599999999999909 16"><path d="M4 5h7l-3.5 6z" fill="#111"/></svg>
<div class="a" style="left:1285px;top:20px;width:14px;height:16px;background:#444;border-radius:1px"></div>
<svg style="left:1285px;top:20px" width="14" height="16" viewBox="0 0 14 16"><circle cx="7" cy="8" r="3.3" fill="none" stroke="#111" stroke-width="1.3"/><circle cx="7" cy="8" r="1" fill="#111"/></svg>
<div class="a" style="left:1300px;top:20px;width:14px;height:16px;background:#444;border-radius:1px"></div>
<svg style="left:1300px;top:20px" width="14" height="16" viewBox="0 0 14 16"><path d="M3 7h8v3H3z" fill="#111"/><path d="M4.5 6l-1-2M9.5 6l1-2" stroke="#111" stroke-width="1"/></svg>
<div class="a" style="left:1315px;top:20px;width:14.5px;height:16px;background:#444;border-radius:1px"></div>
<svg style="left:1315px;top:20px" width="14.5" height="16" viewBox="0 0 14.5 16"><path d="M3.8 3.2v3.3q0 2.3 2.4 3.1v4.4h2.2V9.6q2.4-0.8 2.4-3.1V3.2H9.3v3H5.3v-3z" fill="#111"/></svg>
<div class="a" style="left:1331px;top:20px;width:6.5px;height:16px;background:#3a3a3a;"></div>
<div class="a" style="left:1337.5px;top:20px;width:231px;height:16px;background:#2f2f2f;"></div>
<div class="t" style="left:1339.5px;top:23.5px;color:#c4c4c4;font-size:8.6px;transform:scaleX(0.89);transform-origin:0 50%">DRT_CAMv5</div>
<div class="a" style="left:1568px;top:20px;width:8px;height:16px;background:#3c3c3c;"></div>
<div class="a" style="left:1577px;top:20px;width:13px;height:16px;background:#444;border-radius:1px"></div>
<svg style="left:1577px;top:20px" width="13" height="16" viewBox="0 0 13 16"><rect x="3.5" y="4.5" width="6" height="6.5" fill="#ddd" stroke="#222" stroke-width="1"/><path d="M4 10.5L9 5" stroke="#222" stroke-width="1.2"/></svg>
<div class="a" style="left:1591px;top:20px;width:15px;height:16px;background:#444;border-radius:1px"></div>
<svg style="left:1591px;top:20px" width="15" height="16" viewBox="0 0 15 16"><rect x="4" y="4.5" width="7" height="7" fill="#ddd" stroke="#222" stroke-width="1"/><path d="M4.5 11L10.5 5" stroke="#222" stroke-width="1.2"/></svg>
<div class="a" style="left:1607px;top:20px;width:14px;height:16px;background:#444;border-radius:1px"></div>
<svg style="left:1607px;top:20px" width="14" height="16" viewBox="0 0 14 16"><path d="M3 9.5l3.5-3 5 1.5-2 2" fill="none" stroke="#111" stroke-width="1.6"/></svg>
<div class="a" style="left:1622px;top:20px;width:15px;height:16px;background:#404040;border-radius:1px"></div>
<div class="a" style="left:1638px;top:20px;width:14px;height:16px;background:#444;border-radius:1px"></div>
<svg style="left:1638px;top:20px" width="14" height="16" viewBox="0 0 14 16"><path d="M4 10V5h6v3M8 7l2 2.5 2-2.5" fill="none" stroke="#111" stroke-width="1.4"/></svg>
<div class="a" style="left:1653px;top:20px;width:14px;height:16px;background:#444;border-radius:1px"></div>
<svg style="left:1653px;top:20px" width="14" height="16" viewBox="0 0 14 16"><text x="7" y="12" font-family="Liberation Sans" font-weight="bold" font-size="10" text-anchor="middle" fill="#111">S</text></svg>
<div class="a" style="left:1669px;top:20px;width:45px;height:16px;background:#3d3d3d;"></div>
<svg style="left:1669px;top:20px" width="45" height="16" viewBox="0 0 45 16"><text x="12" y="12.5" font-family="Liberation Sans" font-weight="bold" font-size="10" text-anchor="middle" fill="#111">?</text><rect x="24" y="5" width="6" height="5" fill="none" stroke="#111" stroke-width="1.2"/><rect x="26" y="3.5" width="6" height="5" fill="none" stroke="#111" stroke-width="1"/><path d="M35 5l5 5M40 5l-5 5" stroke="#111" stroke-width="1.3"/></svg>
<div class="a" style="left:1716px;top:17px;width:9px;height:9px;background:#444;"></div>
<svg style="left:1716px;top:17px" width="9" height="9" viewBox="0 0 9 9"><path d="M1.5 6l3-3 3 3z" fill="#ccc"/></svg>
<div class="a" style="left:1716px;top:26px;width:9px;height:734px;background:#484848;"></div>
<div class="a" style="left:1725px;top:17px;width:1.5px;height:743px;background:#262626;"></div>
<div class="a" style="left:1270px;top:38px;width:32px;height:18px;background:#353535;"></div>
<div class="a" style="left:1302px;top:38px;width:36px;height:18px;background:#2b2b2b;"></div>
<div class="t" style="left:1276px;top:42.5px;color:#c0c0c0;font-size:8.6px;">User</div>
<div class="t" style="left:1310.5px;top:43px;color:#c8c8c8;font-size:8.6px;">Node</div>
<div class="a" style="left:1269.5px;top:55px;width:444px;height:705px;background:#323232;border-left:1px solid #2a2a2a;border-top:1px solid #2a2a2a;border-right:1px solid #2a2a2a"></div>
<div class="t" style="right:325.5px;top:64.5px;color:#bcbcbc;font-size:8.6px;">Input</div>
<div class="a" style="left:1408px;top:69.5px;width:299px;height:1px;background:#242424;"></div>
<div class="t" style="right:325.5px;top:81px;color:#bcbcbc;font-size:8.6px;">encoding</div>
<div class="a" style="left:1409.3px;top:78.5px;width:61.5px;height:15px;background:linear-gradient(#4b4b4b,#414141);border-radius:1px"></div>
<div class="t" style="left:1411.8px;top:81px;color:#c8c8c8;font-size:8.6px;">Linear</div>
<div class="a" style="left:1461.3px;top:84.5px;width:0;height:0;border-left:2.5px solid transparent;border-right:2.5px solid transparent;border-top:3px solid #c0c0c0"></div>
<div class="t" style="left:1473.5px;top:80.5px;color:#bcbcbc;font-size:8.6px;">primaries</div>
<div class="a" style="left:1512px;top:78.5px;width:88px;height:15px;background:linear-gradient(#4b4b4b,#414141);border-radius:1px"></div>
<div class="t" style="left:1514.5px;top:81px;color:#c8c8c8;font-size:8.6px;">AP1-ACES</div>
<div class="a" style="left:1590.5px;top:84.5px;width:0;height:0;border-left:2.5px solid transparent;border-right:2.5px solid transparent;border-top:3px solid #c0c0c0"></div>
<div class="a" style="left:1408.6px;top:99.5px;width:8.5px;height:8px;background:#3a3a3a;box-shadow:inset 0 0 0 1px #2c2c2c"></div>
<div class="t" style="left:1421.1999999999998px;top:98.5px;color:#bcbcbc;font-size:8.6px;">AP1 clamp</div>
<div class="a" style="left:1296px;top:118px;width:411px;height:1px;background:#2a2a2a;"></div>
<div class="a" style="left:1408.6px;top:131px;width:8.5px;height:8px;background:#3a3a3a;box-shadow:inset 0 0 0 1px #2c2c2c"></div>
<div class="t" style="left:1421.1999999999998px;top:130px;color:#bcbcbc;font-size:8.6px;">HK_mode_in</div>
<svg style="left:1473px;top:130.5px" width="9" height="9" viewBox="0 0 9 9"><path d="M2 2l5 5M7 2l-5 5" stroke="#e0e0e0" stroke-width="2"/></svg>
<div class="t" style="left:1486px;top:130px;color:#bcbcbc;font-size:8.6px;">discountIlluminant_in</div>
<div class="a" style="left:1408.6px;top:147px;width:8.5px;height:8px;background:#3a3a3a;box-shadow:inset 0 0 0 1px #2c2c2c"></div>
<div class="t" style="left:1421.1999999999998px;top:146px;color:#bcbcbc;font-size:8.6px;">HK_mode_mid</div>
<svg style="left:1480.5px;top:146.5px" width="9" height="9" viewBox="0 0 9 9"><path d="M2 2l5 5M7 2l-5 5" stroke="#e0e0e0" stroke-width="2"/></svg>
<div class="t" style="left:1493.7px;top:146px;color:#bcbcbc;font-size:8.6px;">discountIlluminant_mid</div>
<div class="a" style="left:1408.6px;top:163px;width:8.5px;height:8px;background:#3a3a3a;box-shadow:inset 0 0 0 1px #2c2c2c"></div>
<div class="t" style="left:1421.1999999999998px;top:162px;color:#bcbcbc;font-size:8.6px;">HK_mode_out</div>
<svg style="left:1479px;top:162.5px" width="9" height="9" viewBox="0 0 9 9"><path d="M2 2l5 5M7 2l-5 5" stroke="#e0e0e0" stroke-width="2"/></svg>
<div class="t" style="left:1491.8px;top:162px;color:#bcbcbc;font-size:8.6px;">discountIlluminant_out</div>
<div class="a" style="left:1296px;top:182px;width:411px;height:1px;background:#2a2a2a;"></div>
<div class="a" style="left:1408.6px;top:194.5px;width:8.5px;height:8px;background:#3a3a3a;box-shadow:inset 0 0 0 1px #2c2c2c"></div>
<div class="t" style="left:1421.1999999999998px;top:193.5px;color:#bcbcbc;font-size:8.6px;">compressMode</div>
<div class="t" style="right:325.5px;top:210.5px;color:#bcbcbc;font-size:8.6px;">Hellwig Cam16 Data</div>
<div class="a" style="left:1409.3px;top:208.0px;width:83.70000000000005px;height:15px;background:linear-gradient(#4b4b4b,#414141);border-radius:1px"></div>
<div class="t" style="left:1411.8px;top:210.5px;color:#c8c8c8;font-size:8.6px;">Live from params</div>
<div class="a" style="left:1483.5px;top:214.0px;width:0;height:0;border-left:2.5px solid transparent;border-right:2.5px solid transparent;border-top:3px solid #c0c0c0"></div>
<div class="t" style="right:325.5px;top:228.5px;color:#bcbcbc;font-size:8.6px;">Input Viewing Conditions</div>
<div class="a" style="left:1409.3px;top:226.0px;width:48.700000000000045px;height:15px;background:linear-gradient(#4b4b4b,#414141);border-radius:1px"></div>
<div class="t" style="left:1411.8px;top:228.5px;color:#c8c8c8;font-size:8.6px;">dim</div>
<div class="a" style="left:1448.5px;top:232.0px;width:0;height:0;border-left:2.5px solid transparent;border-right:2.5px solid transparent;border-top:3px solid #c0c0c0"></div>
<div class="t" style="right:325.5px;top:245px;color:#bcbcbc;font-size:8.6px;">Achromatic response</div>
<div class="a" style="left:1409px;top:243.5px;width:48px;height:13px;background:#383838;border-top:1px solid #282828"></div>
<div class="t" style="left:1410.8px;top:245px;color:#cfcfcf;font-size:8.6px;">1</div>
<div class="a" style="left:1460px;top:248.4px;width:232px;height:1.8px;background:#141414;"></div>
<div class="a" style="left:1460.0px;top:246.5px;width:1px;height:2px;background:#2a2a2a;"></div>
<div class="t" style="left:1459.5px;top:248.3px;color:#232323;font-size:5.8px;">0</div>
<div class="a" style="left:1483.2px;top:246.5px;width:1px;height:2px;background:#2a2a2a;"></div>
<div class="t" style="left:1482.7px;top:248.3px;color:#232323;font-size:5.8px;">0.1</div>
<div class="a" style="left:1506.4px;top:246.5px;width:1px;height:2px;background:#2a2a2a;"></div>
<div class="t" style="left:1505.9px;top:248.3px;color:#232323;font-size:5.8px;">0.2</div>
<div class="a" style="left:1529.6px;top:246.5px;width:1px;height:2px;background:#2a2a2a;"></div>
<div class="t" style="left:1529.1px;top:248.3px;color:#232323;font-size:5.8px;">0.3</div>
<div class="a" style="left:1552.8px;top:246.5px;width:1px;height:2px;background:#2a2a2a;"></div>
<div class="t" style="left:1552.3px;top:248.3px;color:#232323;font-size:5.8px;">0.4</div>
<div class="a" style="left:1576.0px;top:246.5px;width:1px;height:2px;background:#2a2a2a;"></div>
<div class="t" style="left:1575.5px;top:248.3px;color:#232323;font-size:5.8px;">0.5</div>
<div class="a" style="left:1599.2px;top:246.5px;width:1px;height:2px;background:#2a2a2a;"></div>
<div class="t" style="left:1598.7px;top:248.3px;color:#232323;font-size:5.8px;">0.6</div>
<div class="a" style="left:1622.4px;top:246.5px;width:1px;height:2px;background:#2a2a2a;"></div>
<div class="t" style="left:1621.9px;top:248.3px;color:#232323;font-size:5.8px;">0.7</div>
<div class="a" style="left:1645.6px;top:246.5px;width:1px;height:2px;background:#2a2a2a;"></div>
<div class="t" style="left:1645.1px;top:248.3px;color:#232323;font-size:5.8px;">0.8</div>
<div class="a" style="left:1668.8px;top:246.5px;width:1px;height:2px;background:#2a2a2a;"></div>
<div class="t" style="left:1668.3px;top:248.3px;color:#232323;font-size:5.8px;">0.9</div>
<div class="a" style="left:1692.0px;top:246.5px;width:1px;height:2px;background:#2a2a2a;"></div>
<div class="t" style="left:1691.5px;top:248.3px;color:#232323;font-size:5.8px;">1</div>
<div class="a" style="left:1690px;top:245px;width:2px;height:6.5px;background:#76765a;border-radius:1px"></div>
<div class="a" style="left:1694px;top:243.5px;width:13px;height:13px;background:#4c4c4c;"></div>
<svg style="left:1694px;top:243.5px" width="13" height="13" viewBox="0 0 13 13"><path d="M2.5 10C4.5 10 4.5 3.5 6.5 3.5S8.5 9.5 10.5 3" fill="none" stroke="#1c1c1c" stroke-width="1.4"/></svg>
<div class="a" style="left:1296px;top:266.6px;width:411px;height:1px;background:#2a2a2a;"></div>
<div class="t" style="right:325.5px;top:276px;color:#bcbcbc;font-size:8.6px;">Tonescale</div>
<div class="a" style="left:1408px;top:281px;width:299px;height:1px;background:#242424;"></div>
<div class="t" style="right:325.5px;top:293px;color:#bcbcbc;font-size:8.6px;">ToneScale Mode</div>
<div class="a" style="left:1409.3px;top:290.5px;width:85.70000000000005px;height:15px;background:linear-gradient(#4b4b4b,#414141);border-radius:1px"></div>
<div class="t" style="left:1411.8px;top:293px;color:#c8c8c8;font-size:8.6px;">Daniele Evo Curve</div>
<div class="a" style="left:1485.5px;top:296.5px;width:0;height:0;border-left:2.5px solid transparent;border-right:2.5px solid transparent;border-top:3px solid #c0c0c0"></div>
<svg style="left:1408.6px;top:310.5px" width="9" height="9" viewBox="0 0 9 9"><path d="M2 2l5 5M7 2l-5 5" stroke="#e0e0e0" stroke-width="2"/></svg>
<div class="t" style="left:1421.1999999999998px;top:310px;color:#bcbcbc;font-size:8.6px;">apply Tonecurve</div>
<div class="t" style="right:325.5px;top:326px;color:#bcbcbc;font-size:8.6px;">Peak Luminance</div>
<div class="a" style="left:1409px;top:324.5px;width:48px;height:13px;background:#383838;border-top:1px solid #282828"></div>
<div class="t" style="left:1410.8px;top:326px;color:#cfcfcf;font-size:8.6px;">100</div>
<div class="a" style="left:1460px;top:329.4px;width:232px;height:1.8px;background:#141414;"></div>
<div class="a" style="left:1460.0px;top:327.5px;width:1px;height:2px;background:#2a2a2a;"></div>
<div class="t" style="left:1459.5px;top:329.3px;color:#232323;font-size:5.8px;">0</div>
<div class="a" style="left:1483.2px;top:327.5px;width:1px;height:2px;background:#2a2a2a;"></div>
<div class="t" style="left:1482.7px;top:329.3px;color:#232323;font-size:5.8px;">100</div>
<div class="a" style="left:1506.4px;top:327.5px;width:1px;height:2px;background:#2a2a2a;"></div>
<div class="t" style="left:1505.9px;top:329.3px;color:#232323;font-size:5.8px;">200</div>
<div class="a" style="left:1529.6px;top:327.5px;width:1px;height:2px;background:#2a2a2a;"></div>
<div class="t" style="left:1529.1px;top:329.3px;color:#232323;font-size:5.8px;">300</div>
<div class="a" style="left:1552.8px;top:327.5px;width:1px;height:2px;background:#2a2a2a;"></div>
<div class="t" style="left:1552.3px;top:329.3px;color:#232323;font-size:5.8px;">400</div>
<div class="a" style="left:1576.0px;top:327.5px;width:1px;height:2px;background:#2a2a2a;"></div>
<div class="t" style="left:1575.5px;top:329.3px;color:#232323;font-size:5.8px;">500</div>
<div class="a" style="left:1599.2px;top:327.5px;width:1px;height:2px;background:#2a2a2a;"></div>
<div class="t" style="left:1598.7px;top:329.3px;color:#232323;font-size:5.8px;">600</div>
<div class="a" style="left:1622.4px;top:327.5px;width:1px;height:2px;background:#2a2a2a;"></div>
<div class="t" style="left:1621.9px;top:329.3px;color:#232323;font-size:5.8px;">700</div>
<div class="a" style="left:1645.6px;top:327.5px;width:1px;height:2px;background:#2a2a2a;"></div>
<div class="t" style="left:1645.1px;top:329.3px;color:#232323;font-size:5.8px;">800</div>
<div class="a" style="left:1668.8px;top:327.5px;width:1px;height:2px;background:#2a2a2a;"></div>
<div class="t" style="left:1668.3px;top:329.3px;color:#232323;font-size:5.8px;">900</div>
<div class="a" style="left:1692.0px;top:327.5px;width:1px;height:2px;background:#2a2a2a;"></div>
<div class="t" style="left:1691.5px;top:329.3px;color:#232323;font-size:5.8px;">1000</div>
<div class="a" style="left:1482px;top:326px;width:2px;height:6.5px;background:#76765a;border-radius:1px"></div>
<div class="a" style="left:1694px;top:324.5px;width:13px;height:13px;background:#4c4c4c;"></div>
<svg style="left:1694px;top:324.5px" width="13" height="13" viewBox="0 0 13 13"><path d="M2.5 10C4.5 10 4.5 3.5 6.5 3.5S8.5 9.5 10.5 3" fill="none" stroke="#1c1c1c" stroke-width="1.4"/></svg>
<div class="a" style="left:1408.6px;top:343px;width:8.5px;height:8px;background:#3a3a3a;box-shadow:inset 0 0 0 1px #2c2c2c"></div>
<div class="t" style="left:1421.1999999999998px;top:342px;color:#bcbcbc;font-size:8.6px;">monochrome</div>
<div class="t" style="right:325.5px;top:357px;color:#bcbcbc;font-size:8.6px;">Gamut Mapping</div>
<div class="a" style="left:1408px;top:362px;width:299px;height:1px;background:#242424;"></div>
<svg style="left:1408.6px;top:373.5px" width="9" height="9" viewBox="0 0 9 9"><path d="M2 2l5 5M7 2l-5 5" stroke="#e0e0e0" stroke-width="2"/></svg>
<div class="t" style="left:1421.1999999999998px;top:373px;color:#bcbcbc;font-size:8.6px;">apply chroma compression</div>
<svg style="left:1408.6px;top:390.1px" width="9" height="9" viewBox="0 0 9 9"><path d="M2 2l5 5M7 2l-5 5" stroke="#e0e0e0" stroke-width="2"/></svg>
<div class="t" style="left:1421.1999999999998px;top:389.6px;color:#bcbcbc;font-size:8.6px;">apply in gamut expansion</div>
<svg style="left:1408.6px;top:406.1px" width="9" height="9" viewBox="0 0 9 9"><path d="M2 2l5 5M7 2l-5 5" stroke="#e0e0e0" stroke-width="2"/></svg>
<div class="t" style="left:1421.1999999999998px;top:405.6px;color:#bcbcbc;font-size:8.6px;">apply in gamut compression</div>
<div class="a" style="left:1408.6px;top:422.6px;width:8.5px;height:8px;background:#3a3a3a;box-shadow:inset 0 0 0 1px #2c2c2c"></div>
<div class="t" style="left:1421.1999999999998px;top:421.6px;color:#bcbcbc;font-size:8.6px;">apply reach mode clamp</div>
<div class="t" style="right:325.5px;top:436.8px;color:#bcbcbc;font-size:8.6px;">chroma compression</div>
<div class="a" style="left:1409px;top:435.3px;width:48px;height:13px;background:#383838;border-top:1px solid #282828"></div>
<div class="t" style="left:1410.8px;top:436.8px;color:#cfcfcf;font-size:8.6px;">2.4</div>
<div class="a" style="left:1460px;top:440.2px;width:73px;height:1.8px;background:#141414;"></div>
<div class="a" style="left:1460.0px;top:438.3px;width:1px;height:2px;background:#2a2a2a;"></div>
<div class="t" style="left:1459.5px;top:440.1px;color:#232323;font-size:5.8px;">2</div>
<div class="a" style="left:1478.25px;top:438.3px;width:1px;height:2px;background:#2a2a2a;"></div>
<div class="t" style="left:1477.75px;top:440.1px;color:#232323;font-size:5.8px;">4</div>
<div class="a" style="left:1496.5px;top:438.3px;width:1px;height:2px;background:#2a2a2a;"></div>
<div class="t" style="left:1496.0px;top:440.1px;color:#232323;font-size:5.8px;">6</div>
<div class="a" style="left:1514.75px;top:438.3px;width:1px;height:2px;background:#2a2a2a;"></div>
<div class="t" style="left:1514.25px;top:440.1px;color:#232323;font-size:5.8px;">8</div>
<div class="a" style="left:1533.0px;top:438.3px;width:1px;height:2px;background:#2a2a2a;"></div>
<div class="t" style="left:1532.5px;top:440.1px;color:#232323;font-size:5.8px;">10</div>
<div class="a" style="left:1462px;top:436.8px;width:2px;height:6.5px;background:#76765a;border-radius:1px"></div>
<div class="a" style="left:1535px;top:435.3px;width:12px;height:13px;background:#4c4c4c;"></div>
<svg style="left:1535px;top:435.3px" width="12" height="13" viewBox="0 0 13 13"><path d="M2.5 10C4.5 10 4.5 3.5 6.5 3.5S8.5 9.5 10.5 3" fill="none" stroke="#1c1c1c" stroke-width="1.4"/></svg>
<div class="t" style="left:1549px;top:436.8px;color:#bcbcbc;font-size:8.6px;">HDR</div>
<div class="a" style="left:1568px;top:435.3px;width:48px;height:13px;background:#383838;border-top:1px solid #282828"></div>
<div class="t" style="left:1569.8px;top:436.8px;color:#cfcfcf;font-size:8.6px;">3.3</div>
<div class="a" style="left:1620px;top:440.2px;width:72px;height:1.8px;background:#141414;"></div>
<div class="a" style="left:1620.0px;top:438.3px;width:1px;height:2px;background:#2a2a2a;"></div>
<div class="t" style="left:1619.5px;top:440.1px;color:#232323;font-size:5.8px;">2</div>
<div class="a" style="left:1638.0px;top:438.3px;width:1px;height:2px;background:#2a2a2a;"></div>
<div class="t" style="left:1637.5px;top:440.1px;color:#232323;font-size:5.8px;">3</div>
<div class="a" style="left:1656.0px;top:438.3px;width:1px;height:2px;background:#2a2a2a;"></div>
<div class="t" style="left:1655.5px;top:440.1px;color:#232323;font-size:5.8px;">4</div>
<div class="a" style="left:1674.0px;top:438.3px;width:1px;height:2px;background:#2a2a2a;"></div>
<div class="t" style="left:1673.5px;top:440.1px;color:#232323;font-size:5.8px;">5</div>
<div class="a" style="left:1692.0px;top:438.3px;width:1px;height:2px;background:#2a2a2a;"></div>
<div class="t" style="left:1691.5px;top:440.1px;color:#232323;font-size:5.8px;">6</div>
<div class="a" style="left:1642px;top:436.8px;width:2px;height:6.5px;background:#76765a;border-radius:1px"></div>
<div class="a" style="left:1694px;top:435.3px;width:13px;height:13px;background:#4c4c4c;"></div>
<svg style="left:1694px;top:435.3px" width="13" height="13" viewBox="0 0 13 13"><path d="M2.5 10C4.5 10 4.5 3.5 6.5 3.5S8.5 9.5 10.5 3" fill="none" stroke="#1c1c1c" stroke-width="1.4"/></svg>
<div class="t" style="right:325.5px;top:452.3px;color:#bcbcbc;font-size:8.6px;">chroma expansion</div>
<div class="a" style="left:1409px;top:450.8px;width:48px;height:13px;background:#383838;border-top:1px solid #282828"></div>
<div class="t" style="left:1410.8px;top:452.3px;color:#cfcfcf;font-size:8.6px;">1.3</div>
<div class="a" style="left:1460px;top:455.7px;width:73px;height:1.8px;background:#141414;"></div>
<div class="a" style="left:1460.0px;top:453.8px;width:1px;height:2px;background:#2a2a2a;"></div>
<div class="t" style="left:1459.5px;top:455.6px;color:#232323;font-size:5.8px;">1</div>
<div class="a" style="left:1484.3333333333333px;top:453.8px;width:1px;height:2px;background:#2a2a2a;"></div>
<div class="t" style="left:1483.8333333333333px;top:455.6px;color:#232323;font-size:5.8px;">2</div>
<div class="a" style="left:1508.6666666666667px;top:453.8px;width:1px;height:2px;background:#2a2a2a;"></div>
<div class="t" style="left:1508.1666666666667px;top:455.6px;color:#232323;font-size:5.8px;">3</div>
<div class="a" style="left:1533.0px;top:453.8px;width:1px;height:2px;background:#2a2a2a;"></div>
<div class="t" style="left:1532.5px;top:455.6px;color:#232323;font-size:5.8px;">4</div>
<div class="a" style="left:1466px;top:452.3px;width:2px;height:6.5px;background:#76765a;border-radius:1px"></div>
<div class="a" style="left:1535px;top:450.8px;width:12px;height:13px;background:#4c4c4c;"></div>
<svg style="left:1535px;top:450.8px" width="12" height="13" viewBox="0 0 13 13"><path d="M2.5 10C4.5 10 4.5 3.5 6.5 3.5S8.5 9.5 10.5 3" fill="none" stroke="#1c1c1c" stroke-width="1.4"/></svg>
<div class="t" style="left:1549px;top:452.3px;color:#bcbcbc;font-size:8.6px;">HDR</div>
<div class="a" style="left:1568px;top:450.8px;width:48px;height:13px;background:#383838;border-top:1px solid #282828"></div>
<div class="t" style="left:1569.8px;top:452.3px;color:#cfcfcf;font-size:8.6px;">0.69</div>
<div class="a" style="left:1620px;top:455.7px;width:72px;height:1.8px;background:#141414;"></div>
<div class="a" style="left:1620.0px;top:453.8px;width:1px;height:2px;background:#2a2a2a;"></div>
<div class="t" style="left:1619.5px;top:455.6px;color:#232323;font-size:5.8px;">0.5</div>
<div class="a" style="left:1638.0px;top:453.8px;width:1px;height:2px;background:#2a2a2a;"></div>
<div class="t" style="left:1637.5px;top:455.6px;color:#232323;font-size:5.8px;">0.6</div>
<div class="a" style="left:1656.0px;top:453.8px;width:1px;height:2px;background:#2a2a2a;"></div>
<div class="t" style="left:1655.5px;top:455.6px;color:#232323;font-size:5.8px;">0.7</div>
<div class="a" style="left:1674.0px;top:453.8px;width:1px;height:2px;background:#2a2a2a;"></div>
<div class="t" style="left:1673.5px;top:455.6px;color:#232323;font-size:5.8px;">0.8</div>
<div class="a" style="left:1692.0px;top:453.8px;width:1px;height:2px;background:#2a2a2a;"></div>
<div class="t" style="left:1691.5px;top:455.6px;color:#232323;font-size:5.8px;">0.9</div>
<div class="a" style="left:1652px;top:452.3px;width:2px;height:6.5px;background:#76765a;border-radius:1px"></div>
<div class="a" style="left:1694px;top:450.8px;width:13px;height:13px;background:#4c4c4c;"></div>
<svg style="left:1694px;top:450.8px" width="13" height="13" viewBox="0 0 13 13"><path d="M2.5 10C4.5 10 4.5 3.5 6.5 3.5S8.5 9.5 10.5 3" fill="none" stroke="#1c1c1c" stroke-width="1.4"/></svg>
<div class="t" style="right:325.5px;top:467.8px;color:#bcbcbc;font-size:8.6px;">chroma expansion threshold</div>
<div class="a" style="left:1409px;top:466.3px;width:48px;height:13px;background:#383838;border-top:1px solid #282828"></div>
<div class="t" style="left:1410.8px;top:467.8px;color:#cfcfcf;font-size:8.6px;">0.5</div>
<div class="a" style="left:1460px;top:471.2px;width:232px;height:1.8px;background:#141414;"></div>
<div class="a" style="left:1460.0px;top:469.3px;width:1px;height:2px;background:#2a2a2a;"></div>
<div class="t" style="left:1459.5px;top:471.1px;color:#232323;font-size:5.8px;">0.5</div>
<div class="a" style="left:1506.4px;top:469.3px;width:1px;height:2px;background:#2a2a2a;"></div>
<div class="t" style="left:1505.9px;top:471.1px;color:#232323;font-size:5.8px;">0.6</div>
<div class="a" style="left:1552.8px;top:469.3px;width:1px;height:2px;background:#2a2a2a;"></div>
<div class="t" style="left:1552.3px;top:471.1px;color:#232323;font-size:5.8px;">0.7</div>
<div class="a" style="left:1599.2px;top:469.3px;width:1px;height:2px;background:#2a2a2a;"></div>
<div class="t" style="left:1598.7px;top:471.1px;color:#232323;font-size:5.8px;">0.8</div>
<div class="a" style="left:1645.6px;top:469.3px;width:1px;height:2px;background:#2a2a2a;"></div>
<div class="t" style="left:1645.1px;top:471.1px;color:#232323;font-size:5.8px;">0.9</div>
<div class="a" style="left:1692.0px;top:469.3px;width:1px;height:2px;background:#2a2a2a;"></div>
<div class="t" style="left:1691.5px;top:471.1px;color:#232323;font-size:5.8px;">1</div>
<div class="a" style="left:1459px;top:467.8px;width:2px;height:6.5px;background:#76765a;border-radius:1px"></div>
<div class="a" style="left:1694px;top:466.3px;width:13px;height:13px;background:#4c4c4c;"></div>
<svg style="left:1694px;top:466.3px" width="13" height="13" viewBox="0 0 13 13"><path d="M2.5 10C4.5 10 4.5 3.5 6.5 3.5S8.5 9.5 10.5 3" fill="none" stroke="#1c1c1c" stroke-width="1.4"/></svg>
<div class="t" style="right:325.5px;top:484.7px;color:#bcbcbc;font-size:8.6px;">reach primaries</div>
<div class="a" style="left:1409.3px;top:482.2px;width:124.70000000000005px;height:15px;background:linear-gradient(#4b4b4b,#414141);border-radius:1px"></div>
<div class="t" style="left:1411.8px;top:484.7px;color:#c8c8c8;font-size:8.6px;">AP1-ACES</div>
<div class="a" style="left:1524.5px;top:488.2px;width:0;height:0;border-left:2.5px solid transparent;border-right:2.5px solid transparent;border-top:3px solid #c0c0c0"></div>
<div class="t" style="right:325.5px;top:502.6px;color:#bcbcbc;font-size:8.6px;">eccentricity factor</div>
<div class="a" style="left:1409.3px;top:500.1px;width:64.70000000000005px;height:15px;background:linear-gradient(#4b4b4b,#414141);border-radius:1px"></div>
<div class="t" style="left:1411.8px;top:502.6px;color:#c8c8c8;font-size:8.6px;">None</div>
<div class="a" style="left:1464.5px;top:506.1px;width:0;height:0;border-left:2.5px solid transparent;border-right:2.5px solid transparent;border-top:3px solid #c0c0c0"></div>
<div class="a" style="left:1408.6px;top:521px;width:8.5px;height:8px;background:#3a3a3a;box-shadow:inset 0 0 0 1px #2c2c2c"></div>
<div class="t" style="left:1421.1999999999998px;top:520px;color:#bcbcbc;font-size:8.6px;">apply out of gamut compression</div>
<div class="t" style="right:325.5px;top:536.8px;color:#bcbcbc;font-size:8.6px;">limiting primaries</div>
<div class="a" style="left:1409.3px;top:534.3px;width:70.70000000000005px;height:15px;background:linear-gradient(#4b4b4b,#414141);border-radius:1px"></div>
<div class="t" style="left:1411.8px;top:536.8px;color:#c8c8c8;font-size:8.6px;">sRGB/Rec.709</div>
<div class="a" style="left:1470.5px;top:540.3px;width:0;height:0;border-left:2.5px solid transparent;border-right:2.5px solid transparent;border-top:3px solid #c0c0c0"></div>
<div class="t" style="left:1483px;top:536px;color:#bcbcbc;font-size:8.6px;">white point</div>
<div class="a" style="left:1528.5px;top:534.3px;width:61.5px;height:15px;background:linear-gradient(#4b4b4b,#414141);border-radius:1px"></div>
<div class="t" style="left:1531.0px;top:536.8px;color:#c8c8c8;font-size:8.6px;">D65</div>
<div class="a" style="left:1580.5px;top:540.3px;width:0;height:0;border-left:2.5px solid transparent;border-right:2.5px solid transparent;border-top:3px solid #c0c0c0"></div>
<div class="t" style="right:325.5px;top:554.7px;color:#bcbcbc;font-size:8.6px;">reach primaries</div>
<div class="a" style="left:1409.3px;top:552.2px;width:124.70000000000005px;height:15px;background:linear-gradient(#4b4b4b,#414141);border-radius:1px"></div>
<div class="t" style="left:1411.8px;top:554.7px;color:#c8c8c8;font-size:8.6px;">AP1-ACES</div>
<div class="a" style="left:1524.5px;top:558.2px;width:0;height:0;border-left:2.5px solid transparent;border-right:2.5px solid transparent;border-top:3px solid #c0c0c0"></div>
<svg style="left:1536.5px;top:555.2px" width="9" height="9" viewBox="0 0 9 9"><path d="M2 2l5 5M7 2l-5 5" stroke="#e0e0e0" stroke-width="2"/></svg>
<div class="t" style="left:1549px;top:554.7px;color:#bcbcbc;font-size:8.6px;">Reach Compression Mode</div>
<div class="t" style="right:325.5px;top:573px;color:#bcbcbc;font-size:8.6px;">boundryIntersectionMethod</div>
<div class="a" style="left:1409.3px;top:570.5px;width:74.70000000000005px;height:15px;background:linear-gradient(#4b4b4b,#414141);border-radius:1px"></div>
<div class="t" style="left:1411.8px;top:573px;color:#c8c8c8;font-size:8.6px;">New From Nick</div>
<div class="a" style="left:1474.5px;top:576.5px;width:0;height:0;border-left:2.5px solid transparent;border-right:2.5px solid transparent;border-top:3px solid #c0c0c0"></div>
<svg style="left:1486.5px;top:573.5px" width="9" height="9" viewBox="0 0 9 9"><path d="M2 2l5 5M7 2l-5 5" stroke="#e0e0e0" stroke-width="2"/></svg>
<div class="t" style="left:1499px;top:573px;color:#bcbcbc;font-size:8.6px;">Use Nick method for reach</div>
<div class="a" style="left:1408.6px;top:591.6px;width:8.5px;height:8px;background:#3a3a3a;box-shadow:inset 0 0 0 1px #2c2c2c"></div>
<div class="t" style="left:1421.1999999999998px;top:590.6px;color:#bcbcbc;font-size:8.6px;">disableUpperHullGamma</div>
<div class="t" style="left:1521px;top:590.3px;color:#bcbcbc;font-size:8.6px;">upperHullGamma</div>
<div class="a" style="left:1590px;top:589.1px;width:49px;height:13px;background:#383838;border-top:1px solid #282828"></div>
<div class="t" style="left:1591.8px;top:590.6px;color:#cfcfcf;font-size:8.6px;">1</div>
<div class="a" style="left:1642px;top:594.0px;width:50px;height:1.8px;background:#141414;"></div>
<div class="a" style="left:1642.0px;top:592.1px;width:1px;height:2px;background:#2a2a2a;"></div>
<div class="t" style="left:1641.5px;top:593.9px;color:#232323;font-size:5.8px;">0</div>
<div class="a" style="left:1667.0px;top:592.1px;width:1px;height:2px;background:#2a2a2a;"></div>
<div class="t" style="left:1666.5px;top:593.9px;color:#232323;font-size:5.8px;">1</div>
<div class="a" style="left:1692.0px;top:592.1px;width:1px;height:2px;background:#2a2a2a;"></div>
<div class="t" style="left:1691.5px;top:593.9px;color:#232323;font-size:5.8px;">2</div>
<div class="a" style="left:1667px;top:590.6px;width:2px;height:6.5px;background:#76765a;border-radius:1px"></div>
<div class="a" style="left:1694px;top:589.1px;width:13px;height:13px;background:#4c4c4c;"></div>
<svg style="left:1694px;top:589.1px" width="13" height="13" viewBox="0 0 13 13"><path d="M2.5 10C4.5 10 4.5 3.5 6.5 3.5S8.5 9.5 10.5 3" fill="none" stroke="#1c1c1c" stroke-width="1.4"/></svg>
<svg style="left:1408.6px;top:606.5px" width="9" height="9" viewBox="0 0 9 9"><path d="M2 2l5 5M7 2l-5 5" stroke="#e0e0e0" stroke-width="2"/></svg>
<div class="t" style="left:1421.1999999999998px;top:606px;color:#bcbcbc;font-size:8.6px;">disableLowerHullGamma</div>
<div class="t" style="left:1521px;top:605.7px;color:#bcbcbc;font-size:8.6px;">lowerHullGamma</div>
<div class="a" style="left:1589px;top:604.5px;width:48px;height:13px;background:#383838;border-top:1px solid #282828"></div>
<div class="t" style="left:1590.8px;top:606px;color:#cfcfcf;font-size:8.6px;">1.14</div>
<div class="a" style="left:1640px;top:609.4px;width:52px;height:1.8px;background:#141414;"></div>
<div class="a" style="left:1640.0px;top:607.5px;width:1px;height:2px;background:#2a2a2a;"></div>
<div class="t" style="left:1639.5px;top:609.3px;color:#232323;font-size:5.8px;">0</div>
<div class="a" style="left:1666.0px;top:607.5px;width:1px;height:2px;background:#2a2a2a;"></div>
<div class="t" style="left:1665.5px;top:609.3px;color:#232323;font-size:5.8px;">1</div>
<div class="a" style="left:1692.0px;top:607.5px;width:1px;height:2px;background:#2a2a2a;"></div>
<div class="t" style="left:1691.5px;top:609.3px;color:#232323;font-size:5.8px;">2</div>
<div class="a" style="left:1668px;top:606px;width:2px;height:6.5px;background:#76765a;border-radius:1px"></div>
<div class="a" style="left:1694px;top:604.5px;width:13px;height:13px;background:#4c4c4c;"></div>
<svg style="left:1694px;top:604.5px" width="13" height="13" viewBox="0 0 13 13"><path d="M2.5 10C4.5 10 4.5 3.5 6.5 3.5S8.5 9.5 10.5 3" fill="none" stroke="#1c1c1c" stroke-width="1.4"/></svg>
<div class="t" style="right:325.5px;top:621.8px;color:#bcbcbc;font-size:8.6px;">cusp to mid blend</div>
<div class="a" style="left:1409px;top:620.3px;width:48px;height:13px;background:#383838;border-top:1px solid #282828"></div>
<div class="t" style="left:1410.8px;top:621.8px;color:#cfcfcf;font-size:8.6px;">1.3</div>
<div class="a" style="left:1460px;top:625.1999999999999px;width:232px;height:1.8px;background:#141414;"></div>
<div class="a" style="left:1460.0px;top:623.3px;width:1px;height:2px;background:#2a2a2a;"></div>
<div class="t" style="left:1459.5px;top:625.0999999999999px;color:#232323;font-size:5.8px;">0.5</div>
<div class="a" style="left:1489.0px;top:623.3px;width:1px;height:2px;background:#2a2a2a;"></div>
<div class="t" style="left:1488.5px;top:625.0999999999999px;color:#232323;font-size:5.8px;">0.7</div>
<div class="a" style="left:1518.0px;top:623.3px;width:1px;height:2px;background:#2a2a2a;"></div>
<div class="t" style="left:1517.5px;top:625.0999999999999px;color:#232323;font-size:5.8px;">0.9</div>
<div class="a" style="left:1547.0px;top:623.3px;width:1px;height:2px;background:#2a2a2a;"></div>
<div class="t" style="left:1546.5px;top:625.0999999999999px;color:#232323;font-size:5.8px;">1.1</div>
<div class="a" style="left:1576.0px;top:623.3px;width:1px;height:2px;background:#2a2a2a;"></div>
<div class="t" style="left:1575.5px;top:625.0999999999999px;color:#232323;font-size:5.8px;">1.3</div>
<div class="a" style="left:1605.0px;top:623.3px;width:1px;height:2px;background:#2a2a2a;"></div>
<div class="t" style="left:1604.5px;top:625.0999999999999px;color:#232323;font-size:5.8px;">1.5</div>
<div class="a" style="left:1634.0px;top:623.3px;width:1px;height:2px;background:#2a2a2a;"></div>
<div class="t" style="left:1633.5px;top:625.0999999999999px;color:#232323;font-size:5.8px;">1.7</div>
<div class="a" style="left:1663.0px;top:623.3px;width:1px;height:2px;background:#2a2a2a;"></div>
<div class="t" style="left:1662.5px;top:625.0999999999999px;color:#232323;font-size:5.8px;">1.9</div>
<div class="a" style="left:1692.0px;top:623.3px;width:1px;height:2px;background:#2a2a2a;"></div>
<div class="t" style="left:1691.5px;top:625.0999999999999px;color:#232323;font-size:5.8px;">2</div>
<div class="a" style="left:1575px;top:621.8px;width:2px;height:6.5px;background:#76765a;border-radius:1px"></div>
<div class="a" style="left:1694px;top:620.3px;width:13px;height:13px;background:#4c4c4c;"></div>
<svg style="left:1694px;top:620.3px" width="13" height="13" viewBox="0 0 13 13"><path d="M2.5 10C4.5 10 4.5 3.5 6.5 3.5S8.5 9.5 10.5 3" fill="none" stroke="#1c1c1c" stroke-width="1.4"/></svg>
<div class="t" style="right:325.5px;top:637.6px;color:#bcbcbc;font-size:8.6px;">focus distance</div>
<div class="a" style="left:1409px;top:636.1px;width:48px;height:13px;background:#383838;border-top:1px solid #282828"></div>
<div class="t" style="left:1410.8px;top:637.6px;color:#cfcfcf;font-size:8.6px;">1.35</div>
<div class="a" style="left:1460px;top:641.0px;width:73px;height:1.8px;background:#141414;"></div>
<div class="a" style="left:1460.0px;top:639.1px;width:1px;height:2px;background:#2a2a2a;"></div>
<div class="t" style="left:1459.5px;top:640.9px;color:#232323;font-size:5.8px;">1</div>
<div class="a" style="left:1496.5px;top:639.1px;width:1px;height:2px;background:#2a2a2a;"></div>
<div class="t" style="left:1496.0px;top:640.9px;color:#232323;font-size:5.8px;">1.5</div>
<div class="a" style="left:1533.0px;top:639.1px;width:1px;height:2px;background:#2a2a2a;"></div>
<div class="t" style="left:1532.5px;top:640.9px;color:#232323;font-size:5.8px;">2</div>
<div class="a" style="left:1479px;top:637.6px;width:2px;height:6.5px;background:#76765a;border-radius:1px"></div>
<div class="a" style="left:1534.5px;top:636.1px;width:12.5px;height:13px;background:#4c4c4c;"></div>
<svg style="left:1534.5px;top:636.1px" width="12.5" height="13" viewBox="0 0 13 13"><path d="M2.5 10C4.5 10 4.5 3.5 6.5 3.5S8.5 9.5 10.5 3" fill="none" stroke="#1c1c1c" stroke-width="1.4"/></svg>
<div class="t" style="left:1549px;top:637.6px;color:#bcbcbc;font-size:8.6px;">HDR</div>
<div class="a" style="left:1568px;top:636.1px;width:48px;height:13px;background:#383838;border-top:1px solid #282828"></div>
<div class="t" style="left:1569.8px;top:637.6px;color:#cfcfcf;font-size:8.6px;">1.75</div>
<div class="a" style="left:1620px;top:641.0px;width:72px;height:1.8px;background:#141414;"></div>
<div class="a" style="left:1620.0px;top:639.1px;width:1px;height:2px;background:#2a2a2a;"></div>
<div class="t" style="left:1619.5px;top:640.9px;color:#232323;font-size:5.8px;">1</div>
<div class="a" style="left:1656.0px;top:639.1px;width:1px;height:2px;background:#2a2a2a;"></div>
<div class="t" style="left:1655.5px;top:640.9px;color:#232323;font-size:5.8px;">1.5</div>
<div class="a" style="left:1692.0px;top:639.1px;width:1px;height:2px;background:#2a2a2a;"></div>
<div class="t" style="left:1691.5px;top:640.9px;color:#232323;font-size:5.8px;">2</div>
<div class="a" style="left:1672px;top:637.6px;width:2px;height:6.5px;background:#76765a;border-radius:1px"></div>
<div class="a" style="left:1694px;top:636.1px;width:13px;height:13px;background:#4c4c4c;"></div>
<svg style="left:1694px;top:636.1px" width="13" height="13" viewBox="0 0 13 13"><path d="M2.5 10C4.5 10 4.5 3.5 6.5 3.5S8.5 9.5 10.5 3" fill="none" stroke="#1c1c1c" stroke-width="1.4"/></svg>
<div class="a" style="left:1408.6px;top:654px;width:8.5px;height:8px;background:#3a3a3a;box-shadow:inset 0 0 0 1px #2c2c2c"></div>
<div class="t" style="left:1421.1999999999998px;top:653px;color:#bcbcbc;font-size:8.6px;">disableFocusGain</div>
<div class="t" style="right:325.5px;top:669px;color:#bcbcbc;font-size:8.6px;">focus gain blend</div>
<div class="a" style="left:1409px;top:667.5px;width:48px;height:13px;background:#383838;border-top:1px solid #282828"></div>
<div class="t" style="left:1410.8px;top:669px;color:#cfcfcf;font-size:8.6px;">0.3</div>
<div class="a" style="left:1460px;top:672.4px;width:62px;height:1.8px;background:#141414;"></div>
<div class="a" style="left:1460.0px;top:670.5px;width:1px;height:2px;background:#2a2a2a;"></div>
<div class="t" style="left:1459.5px;top:672.3px;color:#232323;font-size:5.8px;">0</div>
<div class="a" style="left:1491.0px;top:670.5px;width:1px;height:2px;background:#2a2a2a;"></div>
<div class="t" style="left:1490.5px;top:672.3px;color:#232323;font-size:5.8px;">0.5</div>
<div class="a" style="left:1522.0px;top:670.5px;width:1px;height:2px;background:#2a2a2a;"></div>
<div class="t" style="left:1521.5px;top:672.3px;color:#232323;font-size:5.8px;">1</div>
<div class="a" style="left:1477px;top:669px;width:2px;height:6.5px;background:#76765a;border-radius:1px"></div>
<div class="a" style="left:1525px;top:667.5px;width:12px;height:13px;background:#4c4c4c;"></div>
<svg style="left:1525px;top:667.5px" width="12" height="13" viewBox="0 0 13 13"><path d="M2.5 10C4.5 10 4.5 3.5 6.5 3.5S8.5 9.5 10.5 3" fill="none" stroke="#1c1c1c" stroke-width="1.4"/></svg>
<div class="t" style="left:1538.5px;top:669px;color:#bcbcbc;font-size:8.6px;">focus gain</div>
<div class="a" style="left:1579px;top:667.5px;width:48px;height:13px;background:#383838;border-top:1px solid #282828"></div>
<div class="t" style="left:1580.8px;top:669px;color:#cfcfcf;font-size:8.6px;">0.55</div>
<div class="a" style="left:1631px;top:672.4px;width:61px;height:1.8px;background:#141414;"></div>
<div class="a" style="left:1631.0px;top:670.5px;width:1px;height:2px;background:#2a2a2a;"></div>
<div class="t" style="left:1630.5px;top:672.3px;color:#232323;font-size:5.8px;">0</div>
<div class="a" style="left:1661.5px;top:670.5px;width:1px;height:2px;background:#2a2a2a;"></div>
<div class="t" style="left:1661.0px;top:672.3px;color:#232323;font-size:5.8px;">0.5</div>
<div class="a" style="left:1692.0px;top:670.5px;width:1px;height:2px;background:#2a2a2a;"></div>
<div class="t" style="left:1691.5px;top:672.3px;color:#232323;font-size:5.8px;">1</div>
<div class="a" style="left:1663px;top:669px;width:2px;height:6.5px;background:#76765a;border-radius:1px"></div>
<div class="a" style="left:1694px;top:667.5px;width:13px;height:13px;background:#4c4c4c;"></div>
<svg style="left:1694px;top:667.5px" width="13" height="13" viewBox="0 0 13 13"><path d="M2.5 10C4.5 10 4.5 3.5 6.5 3.5S8.5 9.5 10.5 3" fill="none" stroke="#1c1c1c" stroke-width="1.4"/></svg>
<div class="t" style="right:325.5px;top:684.4px;color:#bcbcbc;font-size:8.6px;">compression</div>
<div class="a" style="left:1409px;top:682.9px;width:48px;height:13px;background:#383838;border-top:1px solid #282828"></div>
<div class="t" style="left:1410.8px;top:684.4px;color:#cfcfcf;font-size:8.6px;">0.75</div>
<div class="a" style="left:1409px;top:695.4px;width:48px;height:1.2px;background:#763838;"></div>
<div class="a" style="left:1460px;top:682.9px;width:47px;height:13px;background:#383838;border-top:1px solid #282828"></div>
<div class="t" style="left:1461.8px;top:684.4px;color:#cfcfcf;font-size:8.6px;">1.1</div>
<div class="a" style="left:1460px;top:695.4px;width:47px;height:1.2px;background:#3a5e3e;"></div>
<div class="a" style="left:1510px;top:682.9px;width:47px;height:13px;background:#383838;border-top:1px solid #282828"></div>
<div class="t" style="left:1511.8px;top:684.4px;color:#cfcfcf;font-size:8.6px;">1.3</div>
<div class="a" style="left:1510px;top:695.4px;width:47px;height:1.2px;background:#384a6a;"></div>
<div class="a" style="left:1560px;top:682.9px;width:47px;height:13px;background:#383838;border-top:1px solid #282828"></div>
<div class="t" style="left:1561.8px;top:684.4px;color:#cfcfcf;font-size:8.6px;">1</div>
<div class="a" style="left:1560px;top:695.4px;width:47px;height:1.2px;background:#5e5e5e;"></div>
<div class="a" style="left:1656.5px;top:684px;width:10.5px;height:11px;background:#444;"></div>
<div class="a" style="left:1658.5px;top:686px;width:7px;height:7px;background:#e8f4f8;"></div>
<div class="a" style="left:1669px;top:684px;width:11px;height:11px;background:#444"></div><div class="a" style="left:1670px;top:685px;width:9px;height:9px;border-radius:50%;background:conic-gradient(#f88,#ff8,#8f8,#8ff,#88f,#f8f,#f88)"></div>
<div class="a" style="left:1681px;top:684px;width:12px;height:11px;background:#2a2a2a;"></div>
<div class="t" style="left:1684px;top:684.4px;color:#d0d0d0;font-size:8.6px;">4</div>
<div class="a" style="left:1694px;top:682.9px;width:13px;height:13px;background:#4c4c4c;"></div>
<svg style="left:1694px;top:682.9px" width="13" height="13" viewBox="0 0 13 13"><path d="M2.5 10C4.5 10 4.5 3.5 6.5 3.5S8.5 9.5 10.5 3" fill="none" stroke="#1c1c1c" stroke-width="1.4"/></svg>
<div class="t" style="right:325.5px;top:700px;color:#bcbcbc;font-size:8.6px;">smooth cusps</div>
<div class="a" style="left:1409px;top:698.5px;width:48px;height:13px;background:#383838;border-top:1px solid #282828"></div>
<div class="t" style="left:1410.8px;top:700px;color:#cfcfcf;font-size:8.6px;">0.12</div>
<div class="a" style="left:1460px;top:703.4px;width:232px;height:1.8px;background:#141414;"></div>
<div class="a" style="left:1460.0px;top:701.5px;width:1px;height:2px;background:#2a2a2a;"></div>
<div class="t" style="left:1459.5px;top:703.3px;color:#232323;font-size:5.8px;">0</div>
<div class="a" style="left:1483.2px;top:701.5px;width:1px;height:2px;background:#2a2a2a;"></div>
<div class="t" style="left:1482.7px;top:703.3px;color:#232323;font-size:5.8px;">0.1</div>
<div class="a" style="left:1506.4px;top:701.5px;width:1px;height:2px;background:#2a2a2a;"></div>
<div class="t" style="left:1505.9px;top:703.3px;color:#232323;font-size:5.8px;">0.2</div>
<div class="a" style="left:1529.6px;top:701.5px;width:1px;height:2px;background:#2a2a2a;"></div>
<div class="t" style="left:1529.1px;top:703.3px;color:#232323;font-size:5.8px;">0.3</div>
<div class="a" style="left:1552.8px;top:701.5px;width:1px;height:2px;background:#2a2a2a;"></div>
<div class="t" style="left:1552.3px;top:703.3px;color:#232323;font-size:5.8px;">0.4</div>
<div class="a" style="left:1576.0px;top:701.5px;width:1px;height:2px;background:#2a2a2a;"></div>
<div class="t" style="left:1575.5px;top:703.3px;color:#232323;font-size:5.8px;">0.5</div>
<div class="a" style="left:1599.2px;top:701.5px;width:1px;height:2px;background:#2a2a2a;"></div>
<div class="t" style="left:1598.7px;top:703.3px;color:#232323;font-size:5.8px;">0.6</div>
<div class="a" style="left:1622.4px;top:701.5px;width:1px;height:2px;background:#2a2a2a;"></div>
<div class="t" style="left:1621.9px;top:703.3px;color:#232323;font-size:5.8px;">0.7</div>
<div class="a" style="left:1645.6px;top:701.5px;width:1px;height:2px;background:#2a2a2a;"></div>
<div class="t" style="left:1645.1px;top:703.3px;color:#232323;font-size:5.8px;">0.8</div>
<div class="a" style="left:1668.8px;top:701.5px;width:1px;height:2px;background:#2a2a2a;"></div>
<div class="t" style="left:1668.3px;top:703.3px;color:#232323;font-size:5.8px;">0.9</div>
<div class="a" style="left:1692.0px;top:701.5px;width:1px;height:2px;background:#2a2a2a;"></div>
<div class="t" style="left:1691.5px;top:703.3px;color:#232323;font-size:5.8px;">1</div>
<div class="a" style="left:1486px;top:700px;width:2px;height:6.5px;background:#76765a;border-radius:1px"></div>
<div class="a" style="left:1694px;top:698.5px;width:13px;height:13px;background:#4c4c4c;"></div>
<svg style="left:1694px;top:698.5px" width="13" height="13" viewBox="0 0 13 13"><path d="M2.5 10C4.5 10 4.5 3.5 6.5 3.5S8.5 9.5 10.5 3" fill="none" stroke="#1c1c1c" stroke-width="1.4"/></svg>
<div class="t" style="right:325.5px;top:715px;color:#bcbcbc;font-size:8.6px;">smooth J</div>
<div class="a" style="left:1409px;top:713.5px;width:48px;height:13px;background:#383838;border-top:1px solid #282828"></div>
<div class="t" style="left:1410.8px;top:715px;color:#cfcfcf;font-size:8.6px;">0</div>
<div class="a" style="left:1460px;top:718.4px;width:62px;height:1.8px;background:#141414;"></div>
<div class="a" style="left:1460.0px;top:716.5px;width:1px;height:2px;background:#2a2a2a;"></div>
<div class="t" style="left:1459.5px;top:718.3px;color:#232323;font-size:5.8px;">0</div>
<div class="a" style="left:1491.0px;top:716.5px;width:1px;height:2px;background:#2a2a2a;"></div>
<div class="t" style="left:1490.5px;top:718.3px;color:#232323;font-size:5.8px;">0.05</div>
<div class="a" style="left:1522.0px;top:716.5px;width:1px;height:2px;background:#2a2a2a;"></div>
<div class="t" style="left:1521.5px;top:718.3px;color:#232323;font-size:5.8px;">0.1</div>
<div class="a" style="left:1459px;top:715px;width:2px;height:6.5px;background:#76765a;border-radius:1px"></div>
<div class="a" style="left:1525px;top:713.5px;width:12px;height:13px;background:#4c4c4c;"></div>
<svg style="left:1525px;top:713.5px" width="12" height="13" viewBox="0 0 13 13"><path d="M2.5 10C4.5 10 4.5 3.5 6.5 3.5S8.5 9.5 10.5 3" fill="none" stroke="#1c1c1c" stroke-width="1.4"/></svg>
<div class="t" style="left:1538.5px;top:715px;color:#bcbcbc;font-size:8.6px;">smooth M</div>
<div class="a" style="left:1579px;top:713.5px;width:48px;height:13px;background:#383838;border-top:1px solid #282828"></div>
<div class="t" style="left:1580.8px;top:715px;color:#cfcfcf;font-size:8.6px;">0.27</div>
<div class="a" style="left:1631px;top:718.4px;width:61px;height:1.8px;background:#141414;"></div>
<div class="a" style="left:1631.0px;top:716.5px;width:1px;height:2px;background:#2a2a2a;"></div>
<div class="t" style="left:1630.5px;top:718.3px;color:#232323;font-size:5.8px;">0</div>
<div class="a" style="left:1661.5px;top:716.5px;width:1px;height:2px;background:#2a2a2a;"></div>
<div class="t" style="left:1661.0px;top:718.3px;color:#232323;font-size:5.8px;">0.5</div>
<div class="a" style="left:1692.0px;top:716.5px;width:1px;height:2px;background:#2a2a2a;"></div>
<div class="t" style="left:1691.5px;top:718.3px;color:#232323;font-size:5.8px;">0.01</div>
<div class="a" style="left:1687px;top:715px;width:2px;height:6.5px;background:#76765a;border-radius:1px"></div>
<div class="a" style="left:1694px;top:713.5px;width:13px;height:13px;background:#4c4c4c;"></div>
<svg style="left:1694px;top:713.5px" width="13" height="13" viewBox="0 0 13 13"><path d="M2.5 10C4.5 10 4.5 3.5 6.5 3.5S8.5 9.5 10.5 3" fill="none" stroke="#1c1c1c" stroke-width="1.4"/></svg>
<svg style="left:1297px;top:731px" width="8" height="10" viewBox="0 0 8 10"><path d="M1 1l5 4-5 4z" fill="#111"/></svg>
<div class="t" style="left:1309.5px;top:731px;color:#bcbcbc;font-size:8.6px;">sixAxisCompression</div>
<div class="a" style="left:1296px;top:751px;width:411px;height:1px;background:#2a2a2a;"></div>
</body></html>
